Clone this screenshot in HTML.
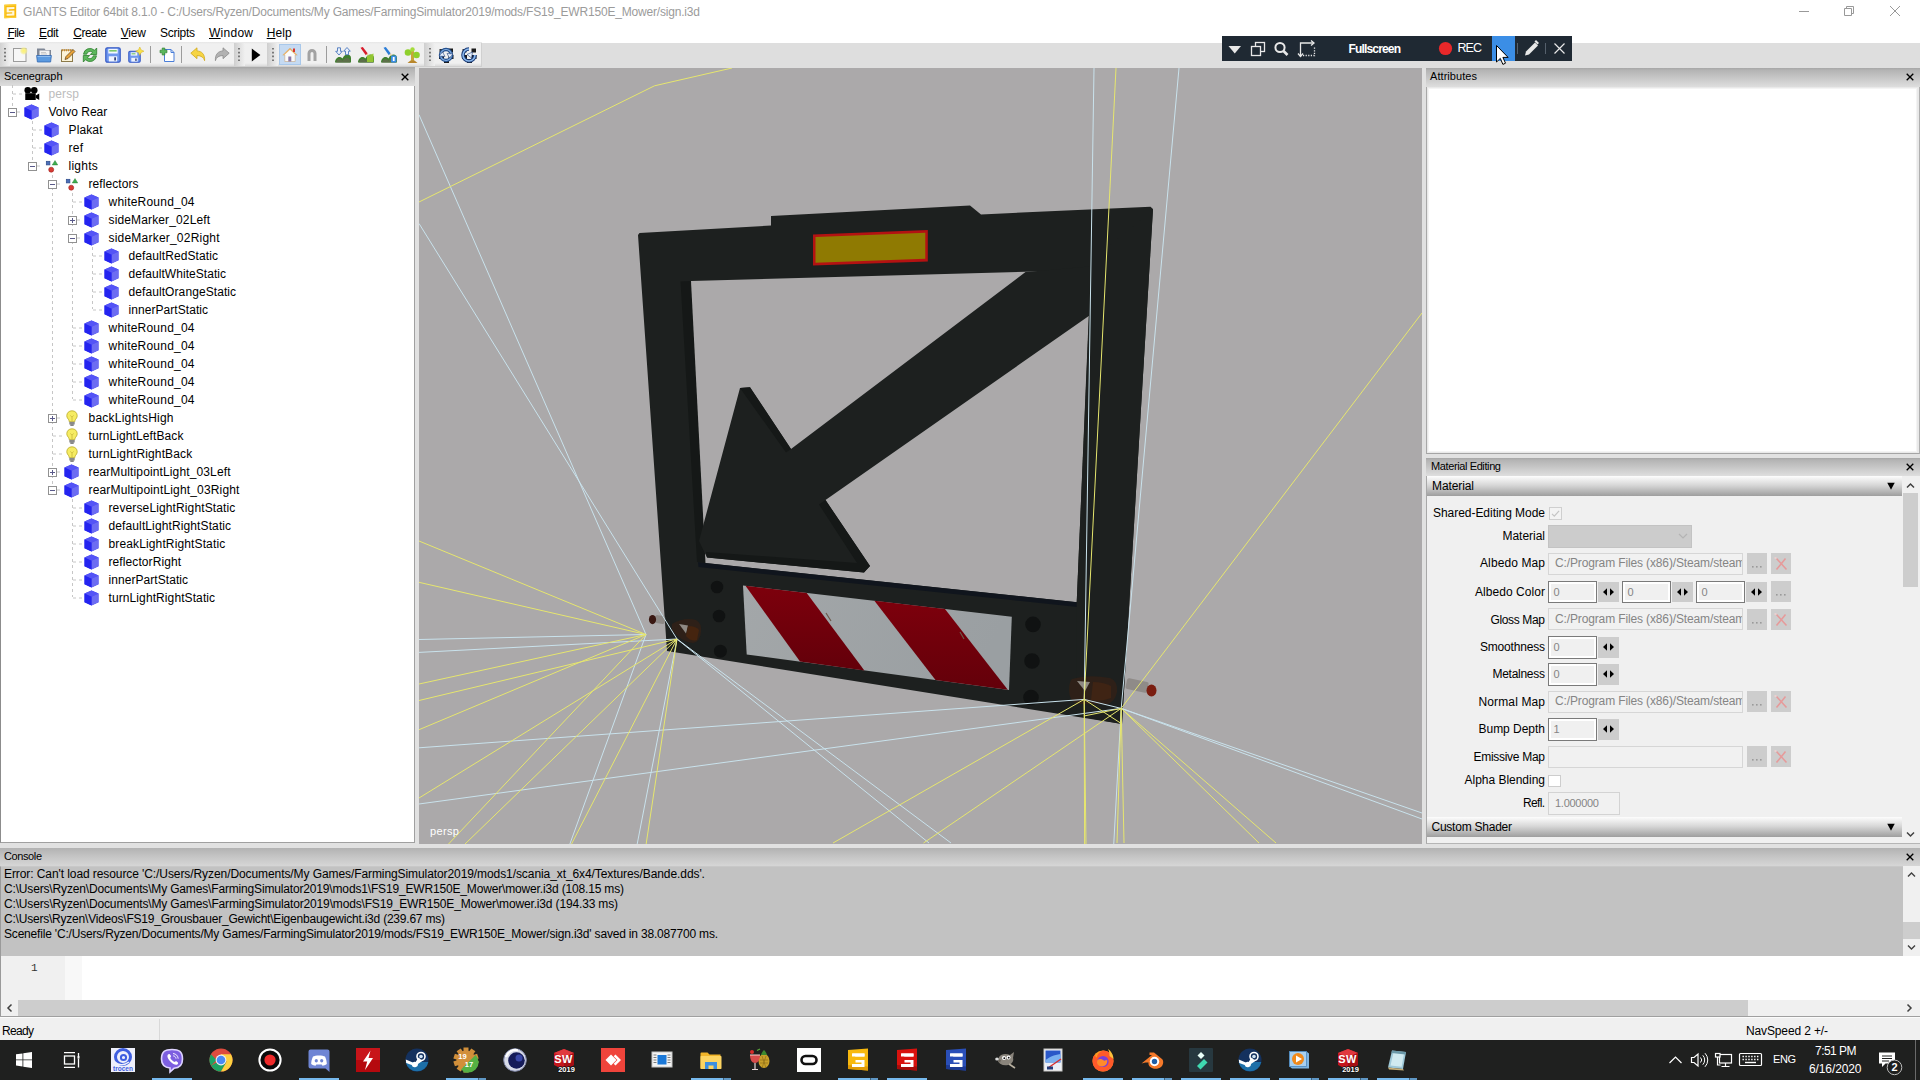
<!DOCTYPE html>
<html lang="en"><head><meta charset="utf-8"><title>GIANTS Editor 64bit 8.1.0</title>
<style>
html,body{margin:0;padding:0;}
body{width:1920px;height:1080px;overflow:hidden;background:#e1e1e1;position:relative;font-family:"Liberation Sans","DejaVu Sans",sans-serif;}
.t{position:absolute;white-space:pre;}
.r{position:absolute;box-sizing:border-box;}
svg{position:absolute;overflow:visible;}
u{text-decoration:underline;text-underline-offset:1px;}
.hd{position:absolute;box-sizing:border-box;background:linear-gradient(#a6a6a6 0,#b4b4b4 12%,#c6c6c6 50%,#dedede 100%);}
.hd2{position:absolute;box-sizing:border-box;background:linear-gradient(#b2b2b2 0,#c4c4c4 45%,#d6d6d6 100%);}
.sec{position:absolute;box-sizing:border-box;background:linear-gradient(#fdfdfd,#d8d8d8 45%,#9e9e9e);}
</style></head><body>

<div class="r" style="left:0px;top:0px;width:1920px;height:22px;background:#fff;"></div>
<svg style="left:3.5px;top:4px" width="12.5" height="14.5" viewBox="0 0 12.5 14.5"><path d="M0.300 0.800L12.200 0.200v13.500L0.300 14.300z" fill="#f9b90a"/><path d="M0.300 0.800L12.200 0.200v1.300L1.500 2v11l10.700-.500v1.200L0.300 14.300z" fill="#fbd03a"/><path d="M2.600 3.300l7.800-.3v2.100l-5.600.2v1.500l5.600-.2v4.900l-7.800.3v-2l5.600-.200V8.300l-5.600.2z" fill="#fff7dc"/></svg>
<span class="t" style="left:23px;top:2.5px;font-size:12px;line-height:18px;color:#9b9b9b;font-family:'Liberation Sans','DejaVu Sans',sans-serif;font-weight:normal;letter-spacing:-0.187px;">GIANTS Editor 64bit 8.1.0 - C:/Users/Ryzen/Documents/My Games/FarmingSimulator2019/mods/FS19_EWR150E_Mower/sign.i3d</span>
<svg style="left:1780px;top:0" width="140" height="22" viewBox="0 0 140 22"><g stroke="#999" stroke-width="1" fill="none"><path d="M19 11.5h10"/><path d="M64.5 8.5h7v7h-7z M66.5 8.5v-2h7v7h-2"/><path d="M110 6l10 10M120 6l-10 10"/></g></svg>
<div class="r" style="left:0px;top:22px;width:1920px;height:21px;background:#fff;"></div>
<span class="t" style="left:7.5px;top:23.5px;font-size:12px;line-height:18px;color:#000;font-family:'Liberation Sans','DejaVu Sans',sans-serif;font-weight:normal;letter-spacing:-0.615px;"><u>F</u>ile</span>
<span class="t" style="left:39px;top:23.5px;font-size:12px;line-height:18px;color:#000;font-family:'Liberation Sans','DejaVu Sans',sans-serif;font-weight:normal;letter-spacing:-0.329px;"><u>E</u>dit</span>
<span class="t" style="left:73.3px;top:23.5px;font-size:12px;line-height:18px;color:#000;font-family:'Liberation Sans','DejaVu Sans',sans-serif;font-weight:normal;letter-spacing:-0.466px;"><u>C</u>reate</span>
<span class="t" style="left:120.8px;top:23.5px;font-size:12px;line-height:18px;color:#000;font-family:'Liberation Sans','DejaVu Sans',sans-serif;font-weight:normal;letter-spacing:-0.266px;"><u>V</u>iew</span>
<span class="t" style="left:160px;top:23.5px;font-size:12px;line-height:18px;color:#000;font-family:'Liberation Sans','DejaVu Sans',sans-serif;font-weight:normal;letter-spacing:-0.281px;">Scripts</span>
<span class="t" style="left:209px;top:23.5px;font-size:12px;line-height:18px;color:#000;font-family:'Liberation Sans','DejaVu Sans',sans-serif;font-weight:normal;letter-spacing:0.263px;"><u>W</u>indow</span>
<span class="t" style="left:266.7px;top:23.5px;font-size:12px;line-height:18px;color:#000;font-family:'Liberation Sans','DejaVu Sans',sans-serif;font-weight:normal;letter-spacing:0.104px;"><u>H</u>elp</span>
<div class="r" style="left:0;top:42px;width:482px;height:25px;background:linear-gradient(#e6e6e6 0,#f0f0f0 2px,#f0f0f0 21px,#dcdcdc 24px,#c2c2c2 25px)"></div>
<div class="r" style="left:482px;top:43px;width:1438px;height:25px;background:#dedede"></div>
<div class="r" style="left:0px;top:43px;width:10px;height:23px;background:linear-gradient(90deg,#d2d2d2,#f0f0f0)"></div>
<div class="r" style="left:234.5px;top:43px;width:10px;height:23px;background:linear-gradient(90deg,#d2d2d2,#f0f0f0)"></div>
<div class="r" style="left:267.5px;top:43px;width:10px;height:23px;background:linear-gradient(90deg,#d2d2d2,#f0f0f0)"></div>
<div class="r" style="left:424.5px;top:43px;width:10px;height:23px;background:linear-gradient(90deg,#d2d2d2,#f0f0f0)"></div>
<svg style="left:4px;top:46px" width="3" height="17" viewBox="0 0 3 17"><path d="M1 2v14" stroke="#5f5f5f" stroke-width="1.600" stroke-dasharray="1.600 2.200"/></svg>
<svg style="left:238px;top:46px" width="3" height="17" viewBox="0 0 3 17"><path d="M1 2v14" stroke="#5f5f5f" stroke-width="1.600" stroke-dasharray="1.600 2.200"/></svg>
<svg style="left:272px;top:46px" width="3" height="17" viewBox="0 0 3 17"><path d="M1 2v14" stroke="#5f5f5f" stroke-width="1.600" stroke-dasharray="1.600 2.200"/></svg>
<svg style="left:429px;top:46px" width="3" height="17" viewBox="0 0 3 17"><path d="M1 2v14" stroke="#5f5f5f" stroke-width="1.600" stroke-dasharray="1.600 2.200"/></svg>
<div class="r" style="left:150px;top:46px;width:1px;height:17px;background:#9c9c9c"></div>
<div class="r" style="left:181px;top:46px;width:1px;height:17px;background:#9c9c9c"></div>
<div class="r" style="left:326px;top:46px;width:1px;height:17px;background:#9c9c9c"></div>
<div class="r" style="left:234px;top:43px;width:1px;height:23px;background:#d0d0d0"></div>
<div class="r" style="left:267px;top:43px;width:1px;height:23px;background:#d0d0d0"></div>
<div class="r" style="left:424px;top:43px;width:1px;height:23px;background:#d0d0d0"></div>
<div class="r" style="left:481px;top:43px;width:1px;height:23px;background:#d0d0d0"></div>
<div class="r" style="left:278.500px;top:44px;width:22.500px;height:20.500px;background:#c5daf2;border:1px solid #a9c8ea"></div>
<svg style="left:12.399999999999999px;top:47px" width="16" height="16" viewBox="0 0 16 16"><defs><radialGradient id="gl"><stop offset="0" stop-color="#fff36a"/><stop offset="0.600" stop-color="#f6ee8a" stop-opacity=".8"/><stop offset="1" stop-color="#f6ee8a" stop-opacity="0"/></radialGradient></defs><rect x="1.500" y="1.500" width="12.500" height="13" fill="#f7f7f7" stroke="#9c9c9c"/><circle cx="11.800" cy="3.800" r="4.200" fill="url(#gl)"/></svg>
<svg style="left:35.8px;top:47px" width="16" height="16" viewBox="0 0 16 16"><path d="M1 1.500h7.500l1 1.500H15v7H1z" fill="#7f8796"/><rect x="3.500" y="3.500" width="10" height="6" fill="#f2f2f2"/><path d="M5 5.500h5M5 7h6" stroke="#b8b8b8" stroke-width=".7"/><path d="M0.600 8.500h14.800l-.8 6.500H1.400z" fill="#5b9ae0" stroke="#3468b0" stroke-width=".8"/><path d="M1.500 9.500h13" stroke="#9cc6f4" stroke-width=".8"/></svg>
<svg style="left:59.5px;top:47px" width="16" height="16" viewBox="0 0 16 16"><rect x="1.500" y="3" width="11" height="11.500" fill="#fbf3d8" stroke="#8c7a4a"/><path d="M2 3.200h10" stroke="#d08a28" stroke-width="2" stroke-dasharray="1 1"/><path d="M5 12.500l1-3 7-7 2 2-7 7z" fill="#e8a33a" stroke="#6b4a1c" stroke-width=".8"/></svg>
<svg style="left:82px;top:47px" width="16" height="16" viewBox="0 0 16 16"><path d="M1.500 7.200a6.500 6.500 0 0 1 11-3.900L14.700 1v6.500H8.300l2.300-2.300A3.600 3.600 0 0 0 4.700 7.200z" fill="#5cb85c" stroke="#2f7f2f" stroke-width=".8"/><path d="M14.500 8.800a6.500 6.500 0 0 1-11 3.900L1.300 15V8.500h6.400l-2.300 2.300a3.600 3.600 0 0 0 5.900-2z" fill="#5cb85c" stroke="#2f7f2f" stroke-width=".8"/></svg>
<svg style="left:105px;top:47px" width="16" height="16" viewBox="0 0 16 16"><rect x="0.800" y="0.800" width="14.400" height="14.400" rx="1.500" fill="#6f98ee" stroke="#3558c4" stroke-width="1.200"/><rect x="3.300" y="1.800" width="9.400" height="4.700" fill="#f2f6ff"/><rect x="4.300" y="3" width="7.400" height="1.600" fill="#7bc86a"/><rect x="3.800" y="9.300" width="8.400" height="5.200" fill="#eef3ff"/><rect x="9.300" y="10.300" width="1.600" height="3.200" fill="#1f2f6a"/></svg>
<svg style="left:128px;top:47px" width="16" height="16" viewBox="0 0 16 16"><rect x="0.800" y="4.300" width="11.400" height="10.900" rx="1.200" fill="#6f98ee" stroke="#3558c4" stroke-width="1.100"/><rect x="2.800" y="5.300" width="6.500" height="3.300" fill="#f2f6ff"/><rect x="3.500" y="6.200" width="4" height="1.200" fill="#7bc86a"/><rect x="3.300" y="10.800" width="6.400" height="3.800" fill="#eef3ff"/><rect x="7.300" y="11.500" width="1.300" height="2.400" fill="#1f2f6a"/><path d="M11.800 0l1.300 2.900 2.900 1.300-2.900 1.300-1.300 2.900-1.300-2.900L7.600 4.200l2.900-1.300z" fill="#f9e24a" stroke="#d4b020" stroke-width=".5"/></svg>
<svg style="left:158.5px;top:47px" width="16" height="16" viewBox="0 0 16 16"><path d="M5.500 2.500h6.500l3 3v9H5.500z" fill="#fff" stroke="#4a7ed8"/><path d="M12 2.500v3h3" fill="none" stroke="#4a7ed8"/><path d="M3.200 1v2.200H1v2.600h2.200V8h2.600V5.800H8V3.200H5.800V1z" fill="#5cb85c" stroke="#2c7a2c" stroke-width=".6"/></svg>
<svg style="left:190px;top:47px" width="16" height="16" viewBox="0 0 16 16"><path d="M0.800 6.200L7 0.800v3.100c4.800.3 8 3.300 7.600 9.800-.8-3.300-3.200-5-7.600-5.200v3.200z" fill="#f6d443" stroke="#d0a81c" stroke-width=".8"/></svg>
<svg style="left:213.5px;top:47px" width="16" height="16" viewBox="0 0 16 16"><path d="M15.200 6.200L9 0.800v3.100C4.200 4.200 1 7.200 1.400 13.700c.8-3.300 3.200-5 7.600-5.200v3.200z" fill="#b2b2b2" stroke="#8c8c8c" stroke-width=".8"/></svg>
<svg style="left:248px;top:47px" width="16" height="16" viewBox="0 0 16 16"><path d="M3.800 1.500v13l8.600-6.500z" fill="#000"/></svg>
<svg style="left:281.7px;top:47px" width="16" height="16" viewBox="0 0 16 16"><path d="M8 1L0.800 8h2v6.500h10.400V8h2z" fill="#fbfbfb" stroke="#c9b090" stroke-width=".7"/><path d="M8 1L0.800 8h1.600L8 2.800 13.600 8h1.600z" fill="#e8b36a"/><rect x="11" y="1.500" width="2" height="3.500" fill="#d8342c"/><rect x="6.300" y="9.500" width="3" height="5" fill="#8a78a8"/></svg>
<svg style="left:304px;top:47px" width="16" height="16" viewBox="0 0 16 16"><path d="M3.500 14V6.500a4.500 4.500 0 0 1 9 0V14h-3V6.500a1.500 1.500 0 0 0-3 0V14z" fill="#a2a2a2"/></svg>
<svg style="left:335px;top:47px" width="16" height="16" viewBox="0 0 16 16"><path d="M0 15.500c0-3 2-5.500 4.500-5.500 1.200 0 2 .5 3 1.500 1-2.500 3-4 5-4 2 0 3.500 1.500 3.500 3.500V15.500z" fill="#3f7f2e"/><path d="M1 15.500c.5-2 1.800-3.500 3.500-3.500 1.200 0 2 .8 3 1.800 1-1.500 2.500-2.800 4.500-2.800 1.500 0 3 1 3 2.500v2z" fill="#5d6f4a"/><path d="M2.500 0.800h3v3.500h1.800L4 8 0.700 4.300h1.800z" fill="#e8f0fb" stroke="#3a6ab8" stroke-width=".8"/><path d="M12 0.500l3.300 3.700h-1.800v3.500h-3V4.200H8.700z" fill="#e8f0fb" stroke="#3a6ab8" stroke-width=".8"/></svg>
<svg style="left:358px;top:47px" width="16" height="16" viewBox="0 0 16 16"><path d="M0 15.500c0-3 2-5.500 4.500-5.500 1.200 0 2 .5 3 1.500 1-2.500 3-4 5-4 2 0 3.500 1.500 3.500 3.500V15.500z" fill="#3f7f2e"/><path d="M1 15.500c.5-2 1.800-3.500 3.500-3.500 1.200 0 2 .8 3 1.800 1-1.500 2.500-2.800 4.500-2.800 1.500 0 3 1 3 2.500v2z" fill="#5d6f4a"/><path d="M2.500 0.800L4.800 0l5 6.500-2 1.800z" fill="#d81c2c"/><path d="M8.300 7.500l1.600-1.400 1.400 3z" fill="#f0d0a0"/><path d="M9 9l6.500-2.500V15H9z" fill="#9acd32" opacity=".9"/></svg>
<svg style="left:381px;top:47px" width="16" height="16" viewBox="0 0 16 16"><path d="M0 15.500c0-3 2-5.500 4.500-5.500 1.200 0 2 .5 3 1.500 1-2.500 3-4 5-4 2 0 3.500 1.500 3.500 3.500V15.500z" fill="#3f7f2e"/><path d="M1 15.500c.5-2 1.800-3.500 3.500-3.500 1.200 0 2 .8 3 1.800 1-1.500 2.500-2.800 4.500-2.800 1.500 0 3 1 3 2.500v2z" fill="#5d6f4a"/><path d="M2.500 0.800L4.800 0l5 6.500-2 1.800z" fill="#2c7ed8"/><path d="M8.300 7.500l1.600-1.400 1.400 3z" fill="#f0d0a0"/><rect x="10" y="8.500" width="5.500" height="7" rx="1" fill="#3a8ee6"/><rect x="11.800" y="10" width="1.800" height="4" fill="#fff"/></svg>
<svg style="left:403.5px;top:47px" width="16" height="16" viewBox="0 0 16 16"><path d="M7 15.500V4.500l1.800-3.500L10 4.500v11z" fill="#c9a53a"/><path d="M3.500 16l3-2.500h4l3 2.500z" fill="#b8862c"/><circle cx="4" cy="5.500" r="3.300" fill="#8fd02c"/><circle cx="12.500" cy="8" r="3.300" fill="#8fd02c"/><circle cx="8.500" cy="2.500" r="2.200" fill="#a5dc3c"/></svg>
<svg style="left:438px;top:47px" width="16" height="16" viewBox="0 0 16 16"><rect x="1" y="8" width="5" height="4" fill="#1a1a1a"/><rect x="6" y="12" width="5" height="4" fill="#1a1a1a"/><rect x="10.500" y="8" width="5" height="4" fill="#1a1a1a"/><rect x="10.500" y="1.500" width="4.500" height="4" fill="#1a1a1a"/><rect x="1.500" y="2" width="4" height="3.500" fill="#333"/><circle cx="8" cy="8" r="5.500" fill="none" stroke="#24508f" stroke-width="3.400"/><circle cx="8" cy="8" r="5.500" fill="none" stroke="#8ab4e6" stroke-width="1.200"/><path d="M1 9l3.500-4 2.500 4.500z" fill="#e8f2ff" stroke="#1c3c78" stroke-width=".6"/><path d="M15 7l-3.500 4-2.500-4.500z" fill="#e8f2ff" stroke="#1c3c78" stroke-width=".6"/></svg>
<svg style="left:461px;top:47px" width="16" height="16" viewBox="0 0 16 16"><rect x="1" y="8" width="5" height="4" fill="#1a1a1a"/><rect x="6" y="12" width="5" height="4" fill="#1a1a1a"/><rect x="10.500" y="8" width="5" height="4" fill="#1a1a1a"/><rect x="10.500" y="1.500" width="4.500" height="4" fill="#1a1a1a"/><rect x="1.500" y="2" width="4" height="3.500" fill="#333"/><path d="M8 2a6 6 0 1 0 6 6" fill="none" stroke="#1c3c78" stroke-width="3.600"/><path d="M8 2a6 6 0 1 0 6 6" fill="none" stroke="#8ab8ec" stroke-width="1.600"/><path d="M6 7.500l5.500-2.500-1 6z" fill="#e8f2ff" stroke="#1c3c78" stroke-width=".6"/></svg>
<div class="r" style="left:1222px;top:36px;width:349.800px;height:24.500px;background:#1f2933"></div>
<div class="r" style="left:1492px;top:36px;width:23px;height:24.500px;background:#3b8ee6"></div>
<svg style="left:1222px;top:36px" width="351" height="25" viewBox="0 0 351 25"><path d="M6.500 10h12.500l-6.250 7.500z" fill="#e8e8e8"/><g fill="none" stroke="#e8e8e8" stroke-width="1.300"><rect x="33.500" y="6.500" width="9" height="9"/><rect x="29.500" y="10.500" width="9" height="9" fill="#1f2933"/><circle cx="58" cy="11.500" r="4.600" stroke-width="2"/><path d="M61.500 15l4 4" stroke-width="2.600"/><path d="M78.500 20.500v-13.500h13.500" /><path d="M81 19.500h11.500v-9" stroke-dasharray="1.200 1.400"/><path d="M76 17.500l2.500 3 2.500-3M89 4.500l3 2.500-3 2.500"/></g><circle cx="223.500" cy="12.500" r="6.600" fill="#e8282a"/><path d="M295.500 7v11M323.500 7v11" stroke="#55606c" stroke-width="1"/><path d="M303 19.500l1-4 9-9 3 3-9 9z" fill="#e8e8e8"/><path d="M312.500 5.500l1.500-1.500 3 3-1.500 1.500z" fill="#e8e8e8"/><path d="M332.500 7.500l10 10M342.500 7.500l-10 10" stroke="#e8e8e8" stroke-width="1.200"/><path d="M274.500 9.500v16.500l3.800-3.600 2.600 6 2.600-1.200-2.600-5.800h5.200z" fill="#fff" stroke="#000" stroke-width="1"/></svg>
<span class="t" style="left:1348.5px;top:39.5px;font-size:12px;line-height:18px;color:#fff;font-family:'Liberation Sans','DejaVu Sans',sans-serif;font-weight:bold;letter-spacing:-0.837px;">Fullscreen</span>
<span class="t" style="left:1457.5px;top:39.2px;font-size:12.5px;line-height:18.5px;color:#fff;font-family:'Liberation Sans','DejaVu Sans',sans-serif;font-weight:normal;letter-spacing:-0.953px;">REC</span>
<div class="hd" style="left:0;top:67px;width:415px;height:19px"></div>
<span class="t" style="left:4px;top:68.0px;font-size:11px;line-height:17px;color:#000;font-family:'Liberation Sans','DejaVu Sans',sans-serif;font-weight:normal;letter-spacing:-0.092px;">Scenegraph</span>
<svg style="left:401px;top:73px" width="8" height="8" viewBox="0 0 8 8"><path d="M0.7 0.7l6.6 6.6M7.3 0.7l-6.6 6.6" stroke="#000" stroke-width="1.35"/></svg>
<div class="r" style="left:0px;top:86px;width:415px;height:757px;background:#fff;border-left:1px solid #8c8c8c;border-right:1px solid #a0a0a0;border-bottom:1px solid #a0a0a0;"></div>
<svg style="left:0px;top:0px" width="415" height="620" viewBox="0 0 415 620"><path d="M12.5 85V108M32.5 121V165M52.5 175V489M72.5 193V399M92.5 247V309M72.5 499V597M13 94.0H22M17 112.0H22M33 130.0H42M33 148.0H42M37 166.0H42M57 184.0H62M73 202.0H82M77 220.0H82M77 238.0H82M93 256.0H102M93 274.0H102M93 292.0H102M93 310.0H102M73 328.0H82M73 346.0H82M73 364.0H82M73 382.0H82M73 400.0H82M57 418.0H62M53 436.0H62M53 454.0H62M57 472.0H62M57 490.0H62M73 508.0H82M73 526.0H82M73 544.0H82M73 562.0H82M73 580.0H82M73 598.0H82" stroke="#c6c6c6" stroke-width="1" stroke-dasharray="3 3" fill="none"/></svg>
<svg style="left:22.5px;top:86px" width="16.5" height="16" viewBox="0 0 16 16"><circle cx="4.5" cy="4.200" r="3.300" fill="#000"/><circle cx="11" cy="4.200" r="3.300" fill="#000"/><rect x="2" y="7.200" width="10.500" height="6.800" fill="#000"/><path d="M12.500 9.500L16 7.500v6.500l-3.500-2z" fill="#000"/></svg>
<span class="t" style="left:48.5px;top:85.0px;font-size:12px;line-height:18px;color:#bcbcbc;font-family:'Liberation Sans','DejaVu Sans',sans-serif;font-weight:normal;letter-spacing:0.117px;">persp</span>
<svg style="left:8px;top:108px" width="9" height="9" viewBox="0 0 9 9"><rect x="0.5" y="0.500" width="8" height="8" fill="#fff" stroke="#919191"/><path d="M2 4.500h5" stroke="#5a5a8a"/></svg>
<svg style="left:23.5px;top:103.5px" width="16" height="16" viewBox="0 0 16 16"><path d="M7.500 0.600L14.500 3.600v8.600L7.500 15.600 0.500 12.200V3.600z" fill="#3a3af0"/><path d="M7.500 0.600L14.500 3.600 7.500 6.800 0.500 3.600z" fill="#5454f6"/><path d="M7.500 6.800L14.500 3.600v8.600L7.500 15.600z" fill="#6c6cf2"/><path d="M0.500 3.600L7.500 6.800v8.800L0.500 12.200z" fill="#2424f0"/></svg>
<span class="t" style="left:48.5px;top:103.0px;font-size:12px;line-height:18px;color:#000;font-family:'Liberation Sans','DejaVu Sans',sans-serif;font-weight:normal;letter-spacing:0.011px;">Volvo Rear</span>
<svg style="left:43.5px;top:121.5px" width="16" height="16" viewBox="0 0 16 16"><path d="M7.500 0.600L14.500 3.600v8.600L7.500 15.600 0.500 12.200V3.600z" fill="#3a3af0"/><path d="M7.500 0.600L14.500 3.600 7.500 6.800 0.500 3.600z" fill="#5454f6"/><path d="M7.500 6.800L14.500 3.600v8.600L7.500 15.600z" fill="#6c6cf2"/><path d="M0.500 3.600L7.500 6.800v8.800L0.500 12.200z" fill="#2424f0"/></svg>
<span class="t" style="left:68.5px;top:121.0px;font-size:12px;line-height:18px;color:#000;font-family:'Liberation Sans','DejaVu Sans',sans-serif;font-weight:normal;letter-spacing:0.128px;">Plakat</span>
<svg style="left:43.5px;top:139.5px" width="16" height="16" viewBox="0 0 16 16"><path d="M7.500 0.600L14.500 3.600v8.600L7.500 15.600 0.500 12.200V3.600z" fill="#3a3af0"/><path d="M7.500 0.600L14.500 3.600 7.500 6.800 0.500 3.600z" fill="#5454f6"/><path d="M7.500 6.800L14.500 3.600v8.600L7.500 15.600z" fill="#6c6cf2"/><path d="M0.500 3.600L7.500 6.800v8.800L0.500 12.200z" fill="#2424f0"/></svg>
<span class="t" style="left:68.5px;top:139.0px;font-size:12px;line-height:18px;color:#000;font-family:'Liberation Sans','DejaVu Sans',sans-serif;font-weight:normal;letter-spacing:0.242px;">ref</span>
<svg style="left:28px;top:162px" width="9" height="9" viewBox="0 0 9 9"><rect x="0.5" y="0.500" width="8" height="8" fill="#fff" stroke="#919191"/><path d="M2 4.500h5" stroke="#5a5a8a"/></svg>
<svg style="left:43.5px;top:157.5px" width="16" height="16" viewBox="0 0 16 16"><rect x="2.3" y="3.3" width="3.6" height="3.6" fill="#4a6fb8" stroke="#2d4a8a" stroke-width="0.7"/><path d="M11 2.6l2.7 4.3H8.300z" fill="#3fae4e" stroke="#2b7f37" stroke-width="0.5"/><circle cx="7.200" cy="11.700" r="2.500" fill="#d83a34" stroke="#9e211d" stroke-width="0.6"/></svg>
<span class="t" style="left:68.5px;top:157.0px;font-size:12px;line-height:18px;color:#000;font-family:'Liberation Sans','DejaVu Sans',sans-serif;font-weight:normal;letter-spacing:0.257px;">lights</span>
<svg style="left:48px;top:180px" width="9" height="9" viewBox="0 0 9 9"><rect x="0.5" y="0.500" width="8" height="8" fill="#fff" stroke="#919191"/><path d="M2 4.500h5" stroke="#5a5a8a"/></svg>
<svg style="left:63.5px;top:175.5px" width="16" height="16" viewBox="0 0 16 16"><rect x="2.3" y="3.3" width="3.6" height="3.6" fill="#4a6fb8" stroke="#2d4a8a" stroke-width="0.7"/><path d="M11 2.6l2.7 4.3H8.300z" fill="#3fae4e" stroke="#2b7f37" stroke-width="0.5"/><circle cx="7.200" cy="11.700" r="2.500" fill="#d83a34" stroke="#9e211d" stroke-width="0.6"/></svg>
<span class="t" style="left:88.5px;top:175.0px;font-size:12px;line-height:18px;color:#000;font-family:'Liberation Sans','DejaVu Sans',sans-serif;font-weight:normal;letter-spacing:0.071px;">reflectors</span>
<svg style="left:83.5px;top:193.5px" width="16" height="16" viewBox="0 0 16 16"><path d="M7.500 0.600L14.500 3.600v8.600L7.500 15.600 0.500 12.200V3.600z" fill="#3a3af0"/><path d="M7.500 0.600L14.500 3.600 7.500 6.800 0.500 3.600z" fill="#5454f6"/><path d="M7.500 6.800L14.500 3.600v8.600L7.500 15.600z" fill="#6c6cf2"/><path d="M0.500 3.600L7.500 6.800v8.800L0.500 12.200z" fill="#2424f0"/></svg>
<span class="t" style="left:108.5px;top:193.0px;font-size:12px;line-height:18px;color:#000;font-family:'Liberation Sans','DejaVu Sans',sans-serif;font-weight:normal;letter-spacing:0.216px;">whiteRound_04</span>
<svg style="left:68px;top:216px" width="9" height="9" viewBox="0 0 9 9"><rect x="0.5" y="0.500" width="8" height="8" fill="#fff" stroke="#919191"/><path d="M2 4.500h5" stroke="#5a5a8a"/><path d="M4.500 2v5" stroke="#5a5a8a"/></svg>
<svg style="left:83.5px;top:211.5px" width="16" height="16" viewBox="0 0 16 16"><path d="M7.500 0.600L14.500 3.600v8.600L7.500 15.600 0.500 12.200V3.600z" fill="#3a3af0"/><path d="M7.500 0.600L14.500 3.600 7.500 6.800 0.500 3.600z" fill="#5454f6"/><path d="M7.500 6.800L14.500 3.600v8.600L7.500 15.600z" fill="#6c6cf2"/><path d="M0.500 3.600L7.500 6.800v8.800L0.500 12.200z" fill="#2424f0"/></svg>
<span class="t" style="left:108.5px;top:211.0px;font-size:12px;line-height:18px;color:#000;font-family:'Liberation Sans','DejaVu Sans',sans-serif;font-weight:normal;letter-spacing:0.138px;">sideMarker_02Left</span>
<svg style="left:68px;top:234px" width="9" height="9" viewBox="0 0 9 9"><rect x="0.5" y="0.500" width="8" height="8" fill="#fff" stroke="#919191"/><path d="M2 4.500h5" stroke="#5a5a8a"/></svg>
<svg style="left:83.5px;top:229.5px" width="16" height="16" viewBox="0 0 16 16"><path d="M7.500 0.600L14.500 3.600v8.600L7.500 15.600 0.500 12.200V3.600z" fill="#3a3af0"/><path d="M7.500 0.600L14.500 3.600 7.500 6.800 0.500 3.600z" fill="#5454f6"/><path d="M7.500 6.800L14.500 3.600v8.600L7.500 15.600z" fill="#6c6cf2"/><path d="M0.500 3.600L7.500 6.800v8.800L0.500 12.200z" fill="#2424f0"/></svg>
<span class="t" style="left:108.5px;top:229.0px;font-size:12px;line-height:18px;color:#000;font-family:'Liberation Sans','DejaVu Sans',sans-serif;font-weight:normal;letter-spacing:0.212px;">sideMarker_02Right</span>
<svg style="left:103.5px;top:247.5px" width="16" height="16" viewBox="0 0 16 16"><path d="M7.500 0.600L14.500 3.600v8.600L7.500 15.600 0.500 12.200V3.600z" fill="#3a3af0"/><path d="M7.500 0.600L14.500 3.600 7.500 6.800 0.500 3.600z" fill="#5454f6"/><path d="M7.500 6.800L14.500 3.600v8.600L7.500 15.600z" fill="#6c6cf2"/><path d="M0.500 3.600L7.500 6.800v8.800L0.500 12.200z" fill="#2424f0"/></svg>
<span class="t" style="left:128.5px;top:247.0px;font-size:12px;line-height:18px;color:#000;font-family:'Liberation Sans','DejaVu Sans',sans-serif;font-weight:normal;letter-spacing:0.089px;">defaultRedStatic</span>
<svg style="left:103.5px;top:265.5px" width="16" height="16" viewBox="0 0 16 16"><path d="M7.500 0.600L14.500 3.600v8.600L7.500 15.600 0.500 12.200V3.600z" fill="#3a3af0"/><path d="M7.500 0.600L14.500 3.600 7.500 6.800 0.500 3.600z" fill="#5454f6"/><path d="M7.500 6.800L14.500 3.600v8.600L7.500 15.600z" fill="#6c6cf2"/><path d="M0.500 3.600L7.500 6.800v8.800L0.500 12.200z" fill="#2424f0"/></svg>
<span class="t" style="left:128.5px;top:265.0px;font-size:12px;line-height:18px;color:#000;font-family:'Liberation Sans','DejaVu Sans',sans-serif;font-weight:normal;letter-spacing:0.046px;">defaultWhiteStatic</span>
<svg style="left:103.5px;top:283.5px" width="16" height="16" viewBox="0 0 16 16"><path d="M7.500 0.600L14.500 3.600v8.600L7.500 15.600 0.500 12.200V3.600z" fill="#3a3af0"/><path d="M7.500 0.600L14.500 3.600 7.500 6.800 0.500 3.600z" fill="#5454f6"/><path d="M7.500 6.800L14.500 3.600v8.600L7.500 15.600z" fill="#6c6cf2"/><path d="M0.500 3.600L7.500 6.800v8.800L0.500 12.200z" fill="#2424f0"/></svg>
<span class="t" style="left:128.5px;top:283.0px;font-size:12px;line-height:18px;color:#000;font-family:'Liberation Sans','DejaVu Sans',sans-serif;font-weight:normal;letter-spacing:0.085px;">defaultOrangeStatic</span>
<svg style="left:103.5px;top:301.5px" width="16" height="16" viewBox="0 0 16 16"><path d="M7.500 0.600L14.500 3.600v8.600L7.500 15.600 0.500 12.200V3.600z" fill="#3a3af0"/><path d="M7.500 0.600L14.500 3.600 7.500 6.800 0.500 3.600z" fill="#5454f6"/><path d="M7.500 6.800L14.500 3.600v8.600L7.500 15.600z" fill="#6c6cf2"/><path d="M0.500 3.600L7.500 6.800v8.800L0.500 12.200z" fill="#2424f0"/></svg>
<span class="t" style="left:128.5px;top:301.0px;font-size:12px;line-height:18px;color:#000;font-family:'Liberation Sans','DejaVu Sans',sans-serif;font-weight:normal;letter-spacing:0.057px;">innerPartStatic</span>
<svg style="left:83.5px;top:319.5px" width="16" height="16" viewBox="0 0 16 16"><path d="M7.500 0.600L14.500 3.600v8.600L7.500 15.600 0.500 12.200V3.600z" fill="#3a3af0"/><path d="M7.500 0.600L14.500 3.600 7.500 6.800 0.500 3.600z" fill="#5454f6"/><path d="M7.500 6.800L14.500 3.600v8.600L7.500 15.600z" fill="#6c6cf2"/><path d="M0.500 3.600L7.500 6.800v8.800L0.500 12.200z" fill="#2424f0"/></svg>
<span class="t" style="left:108.5px;top:319.0px;font-size:12px;line-height:18px;color:#000;font-family:'Liberation Sans','DejaVu Sans',sans-serif;font-weight:normal;letter-spacing:0.216px;">whiteRound_04</span>
<svg style="left:83.5px;top:337.5px" width="16" height="16" viewBox="0 0 16 16"><path d="M7.500 0.600L14.500 3.600v8.600L7.500 15.600 0.500 12.200V3.600z" fill="#3a3af0"/><path d="M7.500 0.600L14.500 3.600 7.500 6.800 0.500 3.600z" fill="#5454f6"/><path d="M7.500 6.800L14.500 3.600v8.600L7.500 15.600z" fill="#6c6cf2"/><path d="M0.500 3.600L7.500 6.800v8.800L0.500 12.200z" fill="#2424f0"/></svg>
<span class="t" style="left:108.5px;top:337.0px;font-size:12px;line-height:18px;color:#000;font-family:'Liberation Sans','DejaVu Sans',sans-serif;font-weight:normal;letter-spacing:0.216px;">whiteRound_04</span>
<svg style="left:83.5px;top:355.5px" width="16" height="16" viewBox="0 0 16 16"><path d="M7.500 0.600L14.500 3.600v8.600L7.500 15.600 0.500 12.200V3.600z" fill="#3a3af0"/><path d="M7.500 0.600L14.500 3.600 7.500 6.800 0.500 3.600z" fill="#5454f6"/><path d="M7.500 6.800L14.500 3.600v8.600L7.500 15.600z" fill="#6c6cf2"/><path d="M0.500 3.600L7.500 6.800v8.800L0.500 12.200z" fill="#2424f0"/></svg>
<span class="t" style="left:108.5px;top:355.0px;font-size:12px;line-height:18px;color:#000;font-family:'Liberation Sans','DejaVu Sans',sans-serif;font-weight:normal;letter-spacing:0.216px;">whiteRound_04</span>
<svg style="left:83.5px;top:373.5px" width="16" height="16" viewBox="0 0 16 16"><path d="M7.500 0.600L14.500 3.600v8.600L7.500 15.600 0.500 12.200V3.600z" fill="#3a3af0"/><path d="M7.500 0.600L14.500 3.600 7.500 6.800 0.500 3.600z" fill="#5454f6"/><path d="M7.500 6.800L14.500 3.600v8.600L7.500 15.600z" fill="#6c6cf2"/><path d="M0.500 3.600L7.500 6.800v8.800L0.500 12.200z" fill="#2424f0"/></svg>
<span class="t" style="left:108.5px;top:373.0px;font-size:12px;line-height:18px;color:#000;font-family:'Liberation Sans','DejaVu Sans',sans-serif;font-weight:normal;letter-spacing:0.216px;">whiteRound_04</span>
<svg style="left:83.5px;top:391.5px" width="16" height="16" viewBox="0 0 16 16"><path d="M7.500 0.600L14.500 3.600v8.600L7.500 15.600 0.500 12.200V3.600z" fill="#3a3af0"/><path d="M7.500 0.600L14.500 3.600 7.500 6.800 0.500 3.600z" fill="#5454f6"/><path d="M7.500 6.800L14.500 3.600v8.600L7.500 15.600z" fill="#6c6cf2"/><path d="M0.500 3.600L7.500 6.800v8.800L0.500 12.200z" fill="#2424f0"/></svg>
<span class="t" style="left:108.5px;top:391.0px;font-size:12px;line-height:18px;color:#000;font-family:'Liberation Sans','DejaVu Sans',sans-serif;font-weight:normal;letter-spacing:0.216px;">whiteRound_04</span>
<svg style="left:48px;top:414px" width="9" height="9" viewBox="0 0 9 9"><rect x="0.5" y="0.500" width="8" height="8" fill="#fff" stroke="#919191"/><path d="M2 4.500h5" stroke="#5a5a8a"/><path d="M4.500 2v5" stroke="#5a5a8a"/></svg>
<svg style="left:63.5px;top:409.5px" width="16" height="16" viewBox="0 0 16 16"><path d="M8 0.8c3.2 0 5.2 2.2 5.2 4.9 0 2-1.2 3-1.9 4.1-.4.7-.4 1.3-.5 1.9H5.2c-.1-.6-.1-1.2-.5-1.9C4 8.700 2.800 7.700 2.800 5.700 2.800 3 4.800.800 8 .800z" fill="#f6ec62" stroke="#b9a92a" stroke-width="0.8"/><path d="M6.3 5.500l1.700 1.600 1.700-1.600M8 7.100v4" stroke="#c9b838" stroke-width="0.8" fill="none"/><rect x="5.300" y="11.900" width="5.400" height="2.600" fill="#8a8a8a"/><rect x="6.300" y="14.500" width="3.400" height="1.200" fill="#555"/></svg>
<span class="t" style="left:88.5px;top:409.0px;font-size:12px;line-height:18px;color:#000;font-family:'Liberation Sans','DejaVu Sans',sans-serif;font-weight:normal;letter-spacing:0.226px;">backLightsHigh</span>
<svg style="left:63.5px;top:427.5px" width="16" height="16" viewBox="0 0 16 16"><path d="M8 0.8c3.2 0 5.2 2.2 5.2 4.9 0 2-1.2 3-1.9 4.1-.4.7-.4 1.3-.5 1.9H5.2c-.1-.6-.1-1.2-.5-1.9C4 8.700 2.800 7.700 2.800 5.700 2.800 3 4.800.800 8 .800z" fill="#f6ec62" stroke="#b9a92a" stroke-width="0.8"/><path d="M6.3 5.500l1.700 1.600 1.700-1.600M8 7.100v4" stroke="#c9b838" stroke-width="0.8" fill="none"/><rect x="5.300" y="11.900" width="5.400" height="2.600" fill="#8a8a8a"/><rect x="6.300" y="14.500" width="3.400" height="1.200" fill="#555"/></svg>
<span class="t" style="left:88.5px;top:427.0px;font-size:12px;line-height:18px;color:#000;font-family:'Liberation Sans','DejaVu Sans',sans-serif;font-weight:normal;letter-spacing:0.093px;">turnLightLeftBack</span>
<svg style="left:63.5px;top:445.5px" width="16" height="16" viewBox="0 0 16 16"><path d="M8 0.8c3.2 0 5.2 2.2 5.2 4.9 0 2-1.2 3-1.9 4.1-.4.7-.4 1.3-.5 1.9H5.2c-.1-.6-.1-1.2-.5-1.9C4 8.700 2.800 7.700 2.800 5.700 2.800 3 4.800.800 8 .800z" fill="#f6ec62" stroke="#b9a92a" stroke-width="0.8"/><path d="M6.3 5.500l1.700 1.600 1.700-1.600M8 7.100v4" stroke="#c9b838" stroke-width="0.8" fill="none"/><rect x="5.300" y="11.900" width="5.400" height="2.600" fill="#8a8a8a"/><rect x="6.300" y="14.500" width="3.400" height="1.200" fill="#555"/></svg>
<span class="t" style="left:88.5px;top:445.0px;font-size:12px;line-height:18px;color:#000;font-family:'Liberation Sans','DejaVu Sans',sans-serif;font-weight:normal;letter-spacing:0.136px;">turnLightRightBack</span>
<svg style="left:48px;top:468px" width="9" height="9" viewBox="0 0 9 9"><rect x="0.5" y="0.500" width="8" height="8" fill="#fff" stroke="#919191"/><path d="M2 4.500h5" stroke="#5a5a8a"/><path d="M4.500 2v5" stroke="#5a5a8a"/></svg>
<svg style="left:63.5px;top:463.5px" width="16" height="16" viewBox="0 0 16 16"><path d="M7.500 0.600L14.500 3.600v8.600L7.500 15.600 0.500 12.200V3.600z" fill="#3a3af0"/><path d="M7.500 0.600L14.500 3.600 7.500 6.800 0.500 3.600z" fill="#5454f6"/><path d="M7.500 6.800L14.500 3.600v8.600L7.500 15.600z" fill="#6c6cf2"/><path d="M0.500 3.600L7.500 6.800v8.800L0.500 12.200z" fill="#2424f0"/></svg>
<span class="t" style="left:88.5px;top:463.0px;font-size:12px;line-height:18px;color:#000;font-family:'Liberation Sans','DejaVu Sans',sans-serif;font-weight:normal;letter-spacing:0.129px;">rearMultipointLight_03Left</span>
<svg style="left:48px;top:486px" width="9" height="9" viewBox="0 0 9 9"><rect x="0.5" y="0.500" width="8" height="8" fill="#fff" stroke="#919191"/><path d="M2 4.500h5" stroke="#5a5a8a"/></svg>
<svg style="left:63.5px;top:481.5px" width="16" height="16" viewBox="0 0 16 16"><path d="M7.500 0.600L14.500 3.600v8.600L7.500 15.600 0.500 12.200V3.600z" fill="#3a3af0"/><path d="M7.500 0.600L14.500 3.600 7.500 6.800 0.500 3.600z" fill="#5454f6"/><path d="M7.500 6.800L14.500 3.600v8.600L7.500 15.600z" fill="#6c6cf2"/><path d="M0.500 3.600L7.500 6.800v8.800L0.500 12.200z" fill="#2424f0"/></svg>
<span class="t" style="left:88.5px;top:481.0px;font-size:12px;line-height:18px;color:#000;font-family:'Liberation Sans','DejaVu Sans',sans-serif;font-weight:normal;letter-spacing:0.159px;">rearMultipointLight_03Right</span>
<svg style="left:83.5px;top:499.5px" width="16" height="16" viewBox="0 0 16 16"><path d="M7.500 0.600L14.500 3.600v8.600L7.500 15.600 0.500 12.200V3.600z" fill="#3a3af0"/><path d="M7.500 0.600L14.500 3.600 7.500 6.800 0.500 3.600z" fill="#5454f6"/><path d="M7.500 6.800L14.500 3.600v8.600L7.500 15.600z" fill="#6c6cf2"/><path d="M0.500 3.600L7.500 6.800v8.800L0.500 12.200z" fill="#2424f0"/></svg>
<span class="t" style="left:108.5px;top:499.0px;font-size:12px;line-height:18px;color:#000;font-family:'Liberation Sans','DejaVu Sans',sans-serif;font-weight:normal;letter-spacing:0.124px;">reverseLightRightStatic</span>
<svg style="left:83.5px;top:517.5px" width="16" height="16" viewBox="0 0 16 16"><path d="M7.500 0.600L14.500 3.600v8.600L7.500 15.600 0.500 12.200V3.600z" fill="#3a3af0"/><path d="M7.500 0.600L14.500 3.600 7.500 6.800 0.500 3.600z" fill="#5454f6"/><path d="M7.500 6.800L14.500 3.600v8.600L7.500 15.600z" fill="#6c6cf2"/><path d="M0.500 3.600L7.500 6.800v8.800L0.500 12.200z" fill="#2424f0"/></svg>
<span class="t" style="left:108.5px;top:517.0px;font-size:12px;line-height:18px;color:#000;font-family:'Liberation Sans','DejaVu Sans',sans-serif;font-weight:normal;letter-spacing:0.115px;">defaultLightRightStatic</span>
<svg style="left:83.5px;top:535.5px" width="16" height="16" viewBox="0 0 16 16"><path d="M7.500 0.600L14.500 3.600v8.600L7.500 15.600 0.500 12.200V3.600z" fill="#3a3af0"/><path d="M7.500 0.600L14.500 3.600 7.500 6.800 0.500 3.600z" fill="#5454f6"/><path d="M7.500 6.800L14.500 3.600v8.600L7.500 15.600z" fill="#6c6cf2"/><path d="M0.500 3.600L7.500 6.800v8.800L0.500 12.200z" fill="#2424f0"/></svg>
<span class="t" style="left:108.5px;top:535.0px;font-size:12px;line-height:18px;color:#000;font-family:'Liberation Sans','DejaVu Sans',sans-serif;font-weight:normal;letter-spacing:0.131px;">breakLightRightStatic</span>
<svg style="left:83.5px;top:553.5px" width="16" height="16" viewBox="0 0 16 16"><path d="M7.500 0.600L14.500 3.600v8.600L7.500 15.600 0.500 12.200V3.600z" fill="#3a3af0"/><path d="M7.500 0.600L14.500 3.600 7.500 6.800 0.500 3.600z" fill="#5454f6"/><path d="M7.500 6.800L14.500 3.600v8.600L7.500 15.600z" fill="#6c6cf2"/><path d="M0.500 3.600L7.500 6.800v8.800L0.500 12.200z" fill="#2424f0"/></svg>
<span class="t" style="left:108.5px;top:553.0px;font-size:12px;line-height:18px;color:#000;font-family:'Liberation Sans','DejaVu Sans',sans-serif;font-weight:normal;letter-spacing:0.094px;">reflectorRight</span>
<svg style="left:83.5px;top:571.5px" width="16" height="16" viewBox="0 0 16 16"><path d="M7.500 0.600L14.500 3.600v8.600L7.500 15.600 0.500 12.200V3.600z" fill="#3a3af0"/><path d="M7.500 0.600L14.500 3.600 7.500 6.800 0.500 3.600z" fill="#5454f6"/><path d="M7.500 6.800L14.500 3.600v8.600L7.500 15.600z" fill="#6c6cf2"/><path d="M0.500 3.600L7.500 6.800v8.800L0.500 12.200z" fill="#2424f0"/></svg>
<span class="t" style="left:108.5px;top:571.0px;font-size:12px;line-height:18px;color:#000;font-family:'Liberation Sans','DejaVu Sans',sans-serif;font-weight:normal;letter-spacing:0.057px;">innerPartStatic</span>
<svg style="left:83.5px;top:589.5px" width="16" height="16" viewBox="0 0 16 16"><path d="M7.500 0.600L14.500 3.600v8.600L7.500 15.600 0.500 12.200V3.600z" fill="#3a3af0"/><path d="M7.500 0.600L14.500 3.600 7.500 6.800 0.500 3.600z" fill="#5454f6"/><path d="M7.500 6.800L14.500 3.600v8.600L7.500 15.600z" fill="#6c6cf2"/><path d="M0.500 3.600L7.500 6.800v8.800L0.500 12.200z" fill="#2424f0"/></svg>
<span class="t" style="left:108.5px;top:589.0px;font-size:12px;line-height:18px;color:#000;font-family:'Liberation Sans','DejaVu Sans',sans-serif;font-weight:normal;letter-spacing:0.098px;">turnLightRightStatic</span>
<svg style="left:419px;top:68px;overflow:hidden" width="1003" height="776" viewBox="419 68 1003 776">
<rect x="419" y="68" width="1003" height="776" fill="#aba9aa"/>
<polygon points="639.5,233.0 771.0,225.5 771.0,216.0 970.0,205.5 981.0,214.4 1150.5,206.8 1153.0,209.0 1122.0,724.0 667.0,651.0 638.0,235.0" fill="#1d201f"/>
<polygon points="680.5,281.5 691.0,281.0 705.5,563.0 697.0,562.0" fill="#151817"/>
<polygon points="691.0,281.0 1091.0,270.0 1076.7,602.2 705.5,563.0" fill="#aba9aa"/>
<polygon points="698.0,562.2 1077.5,602.2 1077.5,607.0 698.5,567.0" fill="#10151d"/>
<polygon points="1025.5,272.0 1096.0,266.0 1089.5,315.5 825.5,500.0 870.0,566.0 864.0,572.5 707.0,557.5 699.0,541.0 740.0,388.0 750.0,387.3 791.0,449.0" fill="#1d201f"/>
<polygon points="825.5,500.0 870.0,566.0 864.0,572.5 707.0,557.5 706.0,552.0 857.0,563.0 819.0,504.5" fill="#151817"/>
<polygon points="740.0,388.0 750.0,387.3 791.0,449.0 786.0,452.5" fill="#151817"/>
<polygon points="1091.0,262.0 1153.0,209.0 1122.0,724.0 1076.7,716.0 1076.7,603.0" fill="#1d201f"/>
<polygon points="813.0,234.4 927.8,230.0 927.8,261.5 813.0,265.5" fill="#b41212"/>
<polygon points="815.5,237.0 925.3,232.7 925.3,258.8 815.5,262.8" fill="#8f7a02"/>
<defs><linearGradient id="wg" x1="0" y1="0" x2="1" y2="0.2"><stop offset="0" stop-color="#a3a7a9"/><stop offset="1" stop-color="#9a9fa2"/></linearGradient><linearGradient id="rg" x1="0" y1="0" x2="0" y2="1"><stop offset="0" stop-color="#7d000c"/><stop offset="1" stop-color="#63000a"/></linearGradient></defs>
<polygon points="743.0,585.5 1011.8,616.7 1009.0,690.0 746.7,654.4" fill="url(#wg)"/>
<polygon points="745.5,585.8 806.7,592.9 864.4,670.4 800.0,661.6" fill="url(#rg)"/>
<polygon points="874.4,600.8 945.0,608.9 1007.8,689.8 935.5,680.0" fill="url(#rg)"/>
<path d="M826 613l5 8M960 632l4 7" stroke="#6d5a4c" stroke-width="1.2" fill="none"/>
<circle cx="717" cy="587" r="6.3" fill="#101212"/>
<circle cx="719" cy="616" r="6.3" fill="#101212"/>
<circle cx="720.4" cy="651.2" r="6.5" fill="#101212"/>
<circle cx="1033" cy="624.4" r="7.8" fill="#101212"/>
<circle cx="1032" cy="661" r="7.8" fill="#101212"/>
<circle cx="1031" cy="697.5" r="7.8" fill="#101212"/>
<path d="M672 624q12-7 24-4q6 3 5 12q-1 10-8 11q-12-1-21-13z" fill="#2e2018"/>
<path d="M679 624l9 1.500l-2 8z" fill="#8f8a84"/><path d="M688 626q8 0 11 4l-2 10q-6 2-11-4z" fill="#45240f"/>
<rect x="655" y="615.5" width="10" height="8" rx="2" fill="#8d8986" transform="rotate(8 660 620)"/>
<ellipse cx="652.5" cy="619.6" rx="3.6" ry="4.6" fill="#3a1812"/>
<path d="M1072 679q16-5 38-1q8 3 7 14q-2 10-10 12h-30q-8-4-8-14q0-8 3-11z" fill="#2e2018"/>
<path d="M1077 681l13 1l-5 9z" fill="#8f8a84"/>
<path d="M1093 682q10 0 18 4v12q-10 4-20 2z" fill="#3f2414"/>
<rect x="1126" y="680" width="22" height="11" rx="2" fill="#8f8b88" transform="rotate(12 1137 686)"/>
<ellipse cx="1151.5" cy="690.5" rx="5" ry="6" fill="#7a1d10"/>
<polyline points="419.0,114.7 646.0,634.5" fill="none" stroke="#c9e2ec" stroke-width="1"/>
<polyline points="419.0,223.5 677.0,639.0" fill="none" stroke="#c9e2ec" stroke-width="1"/>
<polyline points="677.0,639.0 929.0,843.0" fill="none" stroke="#c9e2ec" stroke-width="1"/>
<polyline points="677.0,639.0 951.0,843.0" fill="none" stroke="#c9e2ec" stroke-width="1"/>
<polyline points="646.0,634.5 419.0,639.5" fill="none" stroke="#c9e2ec" stroke-width="1"/>
<polyline points="677.0,639.0 419.0,652.4" fill="none" stroke="#c9e2ec" stroke-width="1"/>
<polyline points="1084.2,699.4 419.0,747.8" fill="none" stroke="#c9e2ec" stroke-width="1"/>
<polyline points="1121.2,708.4 419.0,804.0" fill="none" stroke="#c9e2ec" stroke-width="1"/>
<polyline points="646.0,634.5 569.5,845.0" fill="none" stroke="#c9e2ec" stroke-width="1"/>
<polyline points="677.0,639.0 637.0,845.0" fill="none" stroke="#c9e2ec" stroke-width="1"/>
<polyline points="1094.0,68.0 1084.2,699.4" fill="none" stroke="#c9e2ec" stroke-width="1"/>
<polyline points="1179.0,68.0 1121.2,708.4" fill="none" stroke="#c9e2ec" stroke-width="1"/>
<polyline points="1121.2,708.4 1422.0,813.0" fill="none" stroke="#c9e2ec" stroke-width="1"/>
<polyline points="1121.2,708.4 1422.0,819.0" fill="none" stroke="#c9e2ec" stroke-width="1"/>
<polyline points="1121.2,708.4 1113.7,845.0" fill="none" stroke="#c9e2ec" stroke-width="1"/>
<polyline points="1084.2,699.4 1121.2,708.4" fill="none" stroke="#c9e2ec" stroke-width="1"/>
<polyline points="419.0,202.0 654.5,85.8 732.0,68.0" fill="none" stroke="#e6e66e" stroke-width="1"/>
<polyline points="1116.0,68.0 1084.2,699.4" fill="none" stroke="#e6e66e" stroke-width="1"/>
<polyline points="1422.0,313.0 1121.2,708.4" fill="none" stroke="#e6e66e" stroke-width="1"/>
<polyline points="646.0,634.5 419.0,541.0" fill="none" stroke="#e6e66e" stroke-width="1"/>
<polyline points="646.0,634.5 419.0,582.3" fill="none" stroke="#e6e66e" stroke-width="1"/>
<polyline points="646.0,634.5 419.0,684.0" fill="none" stroke="#e6e66e" stroke-width="1"/>
<polyline points="677.0,639.0 419.0,700.5" fill="none" stroke="#e6e66e" stroke-width="1"/>
<polyline points="646.0,634.5 419.0,729.7" fill="none" stroke="#e6e66e" stroke-width="1"/>
<polyline points="677.0,639.0 419.0,798.0" fill="none" stroke="#e6e66e" stroke-width="1"/>
<polyline points="646.0,634.5 447.6,845.0" fill="none" stroke="#e6e66e" stroke-width="1"/>
<polyline points="677.0,639.0 464.0,845.0" fill="none" stroke="#e6e66e" stroke-width="1"/>
<polyline points="677.0,639.0 571.0,845.0" fill="none" stroke="#e6e66e" stroke-width="1"/>
<polyline points="677.0,639.0 646.0,845.0" fill="none" stroke="#e6e66e" stroke-width="1"/>
<polyline points="1084.2,699.4 1084.6,845.0" fill="none" stroke="#e6e66e" stroke-width="1"/>
<polyline points="1084.2,699.4 1086.0,845.0" fill="none" stroke="#e6e66e" stroke-width="1"/>
<polyline points="1084.2,699.4 833.0,843.0" fill="none" stroke="#e6e66e" stroke-width="1"/>
<polyline points="1121.2,708.4 923.5,843.0" fill="none" stroke="#e6e66e" stroke-width="1"/>
<polyline points="1121.2,708.4 1117.0,843.0" fill="none" stroke="#e6e66e" stroke-width="1"/>
<polyline points="1121.2,708.4 1124.0,843.0" fill="none" stroke="#e6e66e" stroke-width="1"/>
<polyline points="1121.2,708.4 1259.0,843.0" fill="none" stroke="#e6e66e" stroke-width="1"/>
<polyline points="1121.2,708.4 1276.0,843.0" fill="none" stroke="#e6e66e" stroke-width="1"/>
<polyline points="1084.2,699.4 1122.0,724.0" fill="none" stroke="#e6e66e" stroke-width="1"/>
<polyline points="1121.2,708.4 1084.0,716.0" fill="none" stroke="#e6e66e" stroke-width="1"/>
</svg>
<span class="t" style="left:430px;top:823.0px;font-size:11px;line-height:17px;color:#fff;font-family:'Liberation Sans','DejaVu Sans',sans-serif;font-weight:normal;letter-spacing:0.367px;">persp</span>
<div class="hd" style="left:1426px;top:68px;width:494px;height:19px"></div>
<span class="t" style="left:1430px;top:68.0px;font-size:11px;line-height:17px;color:#000;font-family:'Liberation Sans','DejaVu Sans',sans-serif;font-weight:normal;letter-spacing:0.059px;">Attributes</span>
<svg style="left:1906px;top:73px" width="8" height="8" viewBox="0 0 8 8"><path d="M0.7 0.7l6.6 6.6M7.3 0.7l-6.6 6.6" stroke="#000" stroke-width="1.35"/></svg>
<div class="r" style="left:1426px;top:87px;width:494px;height:367px;background:#e9e9e9;border-left:1px solid #a8a8a8;border-bottom:1px solid #a4a4a4;border-right:1px solid #b0b0b0;"></div>
<div class="r" style="left:1428px;top:88px;width:489px;height:364px;background:#fff;border:1px solid #f4f4f4;"></div>
<div class="hd" style="left:1426px;top:458px;width:494px;height:18px"></div>
<span class="t" style="left:1431px;top:458.0px;font-size:11px;line-height:17px;color:#000;font-family:'Liberation Sans','DejaVu Sans',sans-serif;font-weight:normal;letter-spacing:-0.389px;">Material Editing</span>
<svg style="left:1906px;top:463px" width="8" height="8" viewBox="0 0 8 8"><path d="M0.7 0.7l6.6 6.6M7.3 0.7l-6.6 6.6" stroke="#000" stroke-width="1.35"/></svg>
<div class="r" style="left:1426px;top:476px;width:494px;height:368px;background:#f0f0f0;border-left:1px solid #a8a8a8;border-bottom:1px solid #b5b5b5;"></div>
<div class="sec" style="left:1427px;top:476px;width:475px;height:20px"></div>
<span class="t" style="left:1432px;top:477.0px;font-size:12px;line-height:18px;color:#000;font-family:'Liberation Sans','DejaVu Sans',sans-serif;font-weight:normal;letter-spacing:-0.098px;">Material</span>
<svg style="left:1886.5px;top:481.7px" width="8" height="8" viewBox="0 0 9 9"><path d="M0.3 0.8h8.4L4.5 8.6z" fill="#000"/></svg>
<div class="sec" style="left:1427px;top:817px;width:475px;height:20px"></div>
<span class="t" style="left:1431.5px;top:818.0px;font-size:12px;line-height:18px;color:#000;font-family:'Liberation Sans','DejaVu Sans',sans-serif;font-weight:normal;letter-spacing:-0.240px;">Custom Shader</span>
<svg style="left:1886.5px;top:822.7px" width="8" height="8" viewBox="0 0 9 9"><path d="M0.3 0.8h8.4L4.5 8.6z" fill="#000"/></svg>
<div class="r" style="left:1903px;top:476px;width:17px;height:367px;background:#f0f0f0;"></div>
<div class="r" style="left:1903px;top:493px;width:15px;height:94px;background:#cdcdcd;"></div>
<svg style="left:1903px;top:476px" width="17" height="367" viewBox="0 0 17 367"><g stroke="#404040" stroke-width="1.5" fill="none"><path d="M4 11.5l3.5-3.5 3.5 3.5"/><path d="M4 356.5l3.5 3.5 3.5-3.5"/></g></svg>
<span class="t" style="left:1433px;top:504.0px;font-size:12px;line-height:18px;color:#000;font-family:'Liberation Sans','DejaVu Sans',sans-serif;font-weight:normal;letter-spacing:-0.041px;">Shared-Editing Mode</span>
<div class="r" style="left:1549px;top:506.5px;width:13px;height:13px;background:#f3f3f3;border:1px solid #cfcfcf;"></div>
<svg style="left:1549px;top:506.5px" width="13" height="13" viewBox="0 0 13 13"><path d="M3 6.8l2.3 2.4 4.8-5.4" stroke="#c4c4c4" stroke-width="1.2" fill="none"/></svg>
<span class="t" style="left:1502.5px;top:527.0px;font-size:12px;line-height:18px;color:#000;font-family:'Liberation Sans','DejaVu Sans',sans-serif;font-weight:normal;letter-spacing:-0.027px;">Material</span>
<div class="r" style="left:1548px;top:525px;width:144px;height:22.5px;background:#cccccc;border:1px solid #c3c3c3;"></div>
<svg style="left:1677px;top:531px" width="12" height="10" viewBox="0 0 12 10"><path d="M2 3l4 4 4-4" stroke="#b4b4b4" stroke-width="1.2" fill="none"/></svg>
<span class="t" style="left:1480px;top:554.0px;font-size:12px;line-height:18px;color:#000;font-family:'Liberation Sans','DejaVu Sans',sans-serif;font-weight:normal;letter-spacing:0.106px;">Albedo Map</span>
<div class="r" style="left:1548px;top:552.5px;width:195px;height:22px;background:#f1f1f1;border:1px solid #d6d6d6;"></div>
<div class="r" style="left:1549px;top:553.5px;width:193px;height:20px;overflow:hidden">
<span class="t" style="left:6px;top:0.5px;font-size:12px;line-height:18px;color:#858585;font-family:'Liberation Sans','DejaVu Sans',sans-serif;font-weight:normal;letter-spacing:-0.134px;">C:/Program Files (x86)/Steam/steamapps/common/Farming Simulator 19</span>
</div>
<div class="r" style="left:1747px;top:553.0px;width:20px;height:21px;background:#cdcdcd;"></div>
<svg style="left:1747px;top:553.0px" width="20" height="21" viewBox="0 0 20 21"><g fill="#9a9a9a"><rect x="5" y="13" width="1.6" height="1.6"/><rect x="9" y="13" width="1.6" height="1.6"/><rect x="13" y="13" width="1.6" height="1.6"/></g></svg>
<div class="r" style="left:1771px;top:553.0px;width:20px;height:21px;background:#cdcdcd;"></div>
<svg style="left:1771px;top:553.0px" width="20" height="21" viewBox="0 0 20 21"><path d="M5.5 5.5l10 11M14.5 5.5l-9 11" stroke="#e69a9a" stroke-width="1.6" fill="none"/><rect x="3.5" y="4" width="2" height="2" fill="#ead0d0"/></svg>
<span class="t" style="left:1475px;top:583.0px;font-size:12px;line-height:18px;color:#000;font-family:'Liberation Sans','DejaVu Sans',sans-serif;font-weight:normal;letter-spacing:0.057px;">Albedo Color</span>
<div class="r" style="left:1548px;top:580.5px;width:49px;height:22.5px;background:#f0f0f0;border:1px solid #7a7a7a;box-shadow:inset 0 0 0 2px #fff;"></div>
<span class="t" style="left:1553.5px;top:583.5px;font-size:11px;line-height:17px;color:#858585;font-family:'Liberation Sans','DejaVu Sans',sans-serif;font-weight:normal;">0</span>
<div class="r" style="left:1598px;top:581.5px;width:21px;height:20.5px;background:#cdcdcd;"></div>
<svg style="left:1598px;top:581.5px" width="21" height="20" viewBox="0 0 21 20"><path d="M9 6.2v7.6L5 10zM12 6.2v7.6l4-3.8z" fill="#000"/></svg>
<div class="r" style="left:1622px;top:580.5px;width:49px;height:22.5px;background:#f0f0f0;border:1px solid #7a7a7a;box-shadow:inset 0 0 0 2px #fff;"></div>
<span class="t" style="left:1627.5px;top:583.5px;font-size:11px;line-height:17px;color:#858585;font-family:'Liberation Sans','DejaVu Sans',sans-serif;font-weight:normal;">0</span>
<div class="r" style="left:1672px;top:581.5px;width:21px;height:20.5px;background:#cdcdcd;"></div>
<svg style="left:1672px;top:581.5px" width="21" height="20" viewBox="0 0 21 20"><path d="M9 6.2v7.6L5 10zM12 6.2v7.6l4-3.8z" fill="#000"/></svg>
<div class="r" style="left:1696px;top:580.5px;width:49px;height:22.5px;background:#f0f0f0;border:1px solid #7a7a7a;box-shadow:inset 0 0 0 2px #fff;"></div>
<span class="t" style="left:1701.5px;top:583.5px;font-size:11px;line-height:17px;color:#858585;font-family:'Liberation Sans','DejaVu Sans',sans-serif;font-weight:normal;">0</span>
<div class="r" style="left:1746px;top:581.5px;width:21px;height:20.5px;background:#cdcdcd;"></div>
<svg style="left:1746px;top:581.5px" width="21" height="20" viewBox="0 0 21 20"><path d="M9 6.2v7.6L5 10zM12 6.2v7.6l4-3.8z" fill="#000"/></svg>
<div class="r" style="left:1771px;top:581.0px;width:20px;height:21px;background:#cdcdcd;"></div>
<svg style="left:1771px;top:581.0px" width="20" height="21" viewBox="0 0 20 21"><g fill="#9a9a9a"><rect x="5" y="13" width="1.6" height="1.6"/><rect x="9" y="13" width="1.6" height="1.6"/><rect x="13" y="13" width="1.6" height="1.6"/></g></svg>
<span class="t" style="left:1490.5px;top:610.5px;font-size:12px;line-height:18px;color:#000;font-family:'Liberation Sans','DejaVu Sans',sans-serif;font-weight:normal;letter-spacing:-0.357px;">Gloss Map</span>
<div class="r" style="left:1548px;top:608px;width:195px;height:22px;background:#f1f1f1;border:1px solid #d6d6d6;"></div>
<div class="r" style="left:1549px;top:609px;width:193px;height:20px;overflow:hidden">
<span class="t" style="left:6px;top:0.5px;font-size:12px;line-height:18px;color:#858585;font-family:'Liberation Sans','DejaVu Sans',sans-serif;font-weight:normal;letter-spacing:-0.134px;">C:/Program Files (x86)/Steam/steamapps/common/Farming Simulator 19</span>
</div>
<div class="r" style="left:1747px;top:608.5px;width:20px;height:21px;background:#cdcdcd;"></div>
<svg style="left:1747px;top:608.5px" width="20" height="21" viewBox="0 0 20 21"><g fill="#9a9a9a"><rect x="5" y="13" width="1.6" height="1.6"/><rect x="9" y="13" width="1.6" height="1.6"/><rect x="13" y="13" width="1.6" height="1.6"/></g></svg>
<div class="r" style="left:1771px;top:608.5px;width:20px;height:21px;background:#cdcdcd;"></div>
<svg style="left:1771px;top:608.5px" width="20" height="21" viewBox="0 0 20 21"><path d="M5.5 5.5l10 11M14.5 5.5l-9 11" stroke="#e69a9a" stroke-width="1.6" fill="none"/><rect x="3.5" y="4" width="2" height="2" fill="#ead0d0"/></svg>
<span class="t" style="left:1480px;top:637.7px;font-size:12px;line-height:18px;color:#000;font-family:'Liberation Sans','DejaVu Sans',sans-serif;font-weight:normal;letter-spacing:-0.189px;">Smoothness</span>
<div class="r" style="left:1548px;top:636px;width:49px;height:22.5px;background:#f0f0f0;border:1px solid #7a7a7a;box-shadow:inset 0 0 0 2px #fff;"></div>
<span class="t" style="left:1553.5px;top:639.0px;font-size:11px;line-height:17px;color:#858585;font-family:'Liberation Sans','DejaVu Sans',sans-serif;font-weight:normal;">0</span>
<div class="r" style="left:1598px;top:637px;width:21px;height:20.5px;background:#cdcdcd;"></div>
<svg style="left:1598px;top:637px" width="21" height="20" viewBox="0 0 21 20"><path d="M9 6.2v7.6L5 10zM12 6.2v7.6l4-3.8z" fill="#000"/></svg>
<span class="t" style="left:1492.5px;top:664.7px;font-size:12px;line-height:18px;color:#000;font-family:'Liberation Sans','DejaVu Sans',sans-serif;font-weight:normal;letter-spacing:-0.275px;">Metalness</span>
<div class="r" style="left:1548px;top:663px;width:49px;height:22.5px;background:#f0f0f0;border:1px solid #7a7a7a;box-shadow:inset 0 0 0 2px #fff;"></div>
<span class="t" style="left:1553.5px;top:666.0px;font-size:11px;line-height:17px;color:#858585;font-family:'Liberation Sans','DejaVu Sans',sans-serif;font-weight:normal;">0</span>
<div class="r" style="left:1598px;top:664px;width:21px;height:20.5px;background:#cdcdcd;"></div>
<svg style="left:1598px;top:664px" width="21" height="20" viewBox="0 0 21 20"><path d="M9 6.2v7.6L5 10zM12 6.2v7.6l4-3.8z" fill="#000"/></svg>
<span class="t" style="left:1478.5px;top:692.8px;font-size:12px;line-height:18px;color:#000;font-family:'Liberation Sans','DejaVu Sans',sans-serif;font-weight:normal;letter-spacing:0.127px;">Normal Map</span>
<div class="r" style="left:1548px;top:690.5px;width:195px;height:22px;background:#f1f1f1;border:1px solid #d6d6d6;"></div>
<div class="r" style="left:1549px;top:691.5px;width:193px;height:20px;overflow:hidden">
<span class="t" style="left:6px;top:0.5px;font-size:12px;line-height:18px;color:#858585;font-family:'Liberation Sans','DejaVu Sans',sans-serif;font-weight:normal;letter-spacing:-0.134px;">C:/Program Files (x86)/Steam/steamapps/common/Farming Simulator 19</span>
</div>
<div class="r" style="left:1747px;top:691.0px;width:20px;height:21px;background:#cdcdcd;"></div>
<svg style="left:1747px;top:691.0px" width="20" height="21" viewBox="0 0 20 21"><g fill="#9a9a9a"><rect x="5" y="13" width="1.6" height="1.6"/><rect x="9" y="13" width="1.6" height="1.6"/><rect x="13" y="13" width="1.6" height="1.6"/></g></svg>
<div class="r" style="left:1771px;top:691.0px;width:20px;height:21px;background:#cdcdcd;"></div>
<svg style="left:1771px;top:691.0px" width="20" height="21" viewBox="0 0 20 21"><path d="M5.5 5.5l10 11M14.5 5.5l-9 11" stroke="#e69a9a" stroke-width="1.6" fill="none"/><rect x="3.5" y="4" width="2" height="2" fill="#ead0d0"/></svg>
<span class="t" style="left:1478.5px;top:720.0px;font-size:12px;line-height:18px;color:#000;font-family:'Liberation Sans','DejaVu Sans',sans-serif;font-weight:normal;letter-spacing:-0.023px;">Bump Depth</span>
<div class="r" style="left:1548px;top:718px;width:49px;height:22.5px;background:#f0f0f0;border:1px solid #7a7a7a;box-shadow:inset 0 0 0 2px #fff;"></div>
<span class="t" style="left:1553.5px;top:721.0px;font-size:11px;line-height:17px;color:#858585;font-family:'Liberation Sans','DejaVu Sans',sans-serif;font-weight:normal;">1</span>
<div class="r" style="left:1598px;top:719px;width:21px;height:20.5px;background:#cdcdcd;"></div>
<svg style="left:1598px;top:719px" width="21" height="20" viewBox="0 0 21 20"><path d="M9 6.2v7.6L5 10zM12 6.2v7.6l4-3.8z" fill="#000"/></svg>
<span class="t" style="left:1473.5px;top:747.7px;font-size:12px;line-height:18px;color:#000;font-family:'Liberation Sans','DejaVu Sans',sans-serif;font-weight:normal;letter-spacing:-0.290px;">Emissive Map</span>
<div class="r" style="left:1548px;top:745.5px;width:195px;height:22px;background:#f1f1f1;border:1px solid #d6d6d6;"></div>
<div class="r" style="left:1747px;top:746.0px;width:20px;height:21px;background:#cdcdcd;"></div>
<svg style="left:1747px;top:746.0px" width="20" height="21" viewBox="0 0 20 21"><g fill="#9a9a9a"><rect x="5" y="13" width="1.6" height="1.6"/><rect x="9" y="13" width="1.6" height="1.6"/><rect x="13" y="13" width="1.6" height="1.6"/></g></svg>
<div class="r" style="left:1771px;top:746.0px;width:20px;height:21px;background:#cdcdcd;"></div>
<svg style="left:1771px;top:746.0px" width="20" height="21" viewBox="0 0 20 21"><path d="M5.5 5.5l10 11M14.5 5.5l-9 11" stroke="#e69a9a" stroke-width="1.6" fill="none"/><rect x="3.5" y="4" width="2" height="2" fill="#ead0d0"/></svg>
<span class="t" style="left:1464.5px;top:770.6px;font-size:12px;line-height:18px;color:#000;font-family:'Liberation Sans','DejaVu Sans',sans-serif;font-weight:normal;letter-spacing:-0.018px;">Alpha Blending</span>
<div class="r" style="left:1548px;top:774.5px;width:12.5px;height:12.5px;background:#fff;border:1px solid #cdcdcd;"></div>
<span class="t" style="left:1523px;top:793.6px;font-size:12px;line-height:18px;color:#000;font-family:'Liberation Sans','DejaVu Sans',sans-serif;font-weight:normal;letter-spacing:-0.672px;">Refl.</span>
<div class="r" style="left:1548px;top:792px;width:72px;height:22.5px;background:#f1f1f1;border:1px solid #d3d3d3;"></div>
<span class="t" style="left:1555px;top:794.5px;font-size:11px;line-height:17px;color:#858585;font-family:'Liberation Sans','DejaVu Sans',sans-serif;font-weight:normal;letter-spacing:-0.270px;">1.000000</span>
<div class="hd2" style="left:0;top:848px;width:1920px;height:18px"></div>
<span class="t" style="left:4px;top:848.0px;font-size:11px;line-height:17px;color:#000;font-family:'Liberation Sans','DejaVu Sans',sans-serif;font-weight:normal;letter-spacing:-0.393px;transform:scaleX(1);">Console</span>
<svg style="left:1906px;top:853px" width="8" height="8" viewBox="0 0 8 8"><path d="M0.7 0.7l6.6 6.6M7.3 0.7l-6.6 6.6" stroke="#000" stroke-width="1.35"/></svg>
<div class="r" style="left:0px;top:866px;width:1903px;height:90px;background:#c2c2c2;border-left:1px solid #9a9a9a;border-top:1px solid #c8c8c8;"></div>
<span class="t" style="left:4px;top:865.0px;font-size:12px;line-height:18px;color:#000;font-family:'Liberation Sans','DejaVu Sans',sans-serif;font-weight:normal;letter-spacing:-0.084px;">Error: Can&#x27;t load resource &#x27;C:/Users/Ryzen/Documents/My Games/FarmingSimulator2019/mods1/scania_xt_6x4/Textures/Bande.dds&#x27;.</span>
<span class="t" style="left:4px;top:880.0px;font-size:12px;line-height:18px;color:#000;font-family:'Liberation Sans','DejaVu Sans',sans-serif;font-weight:normal;letter-spacing:-0.162px;">C:\Users\Ryzen\Documents\My Games\FarmingSimulator2019\mods1\FS19_EWR150E_Mower\mower.i3d (108.15 ms)</span>
<span class="t" style="left:4px;top:895.0px;font-size:12px;line-height:18px;color:#000;font-family:'Liberation Sans','DejaVu Sans',sans-serif;font-weight:normal;letter-spacing:-0.157px;">C:\Users\Ryzen\Documents\My Games\FarmingSimulator2019\mods\FS19_EWR150E_Mower\mower.i3d (194.33 ms)</span>
<span class="t" style="left:4px;top:910.0px;font-size:12px;line-height:18px;color:#000;font-family:'Liberation Sans','DejaVu Sans',sans-serif;font-weight:normal;letter-spacing:-0.215px;">C:\Users\Ryzen\Videos\FS19_Grousbauer_Gewicht\Eigenbaugewicht.i3d (239.67 ms)</span>
<span class="t" style="left:4px;top:925.0px;font-size:12px;line-height:18px;color:#000;font-family:'Liberation Sans','DejaVu Sans',sans-serif;font-weight:normal;letter-spacing:-0.189px;">Scenefile &#x27;C:/Users/Ryzen/Documents/My Games/FarmingSimulator2019/mods/FS19_EWR150E_Mower/sign.i3d&#x27; saved in 38.087700 ms.</span>
<div class="r" style="left:1903px;top:866px;width:17px;height:90px;background:#f0f0f0;"></div>
<div class="r" style="left:1903px;top:922px;width:17px;height:17px;background:#cdcdcd;"></div>
<svg style="left:1903px;top:866px" width="17" height="90" viewBox="0 0 17 90"><g stroke="#404040" stroke-width="1.4" fill="none"><path d="M5 10.5l3.5-3.5 3.5 3.5"/><path d="M5 79.5l3.5 3.5 3.5-3.5"/></g></svg>
<div class="r" style="left:0px;top:956px;width:1920px;height:44px;background:#fff;border-left:1px solid #9a9a9a;"></div>
<div class="r" style="left:1px;top:956px;width:64px;height:44px;background:#f0f0f0;"></div>
<div class="r" style="left:65px;top:956px;width:17px;height:44px;background:#f8f8f8;"></div>
<span class="t" style="left:31px;top:960.0px;font-size:11px;line-height:17px;color:#333;font-family:'Liberation Mono','DejaVu Sans Mono',monospace;font-weight:normal;">1</span>
<div class="r" style="left:0px;top:1000px;width:1920px;height:16px;background:#f0f0f0;border-left:1px solid #9a9a9a;"></div>
<div class="r" style="left:18px;top:1000px;width:1730px;height:16px;background:#cdcdcd;"></div>
<svg style="left:0;top:1000px" width="1920" height="16" viewBox="0 0 1920 16"><g stroke="#404040" stroke-width="1.5" fill="none"><path d="M11.5 4.5l-3.5 3.5 3.5 3.5"/><path d="M1907.5 4.5l3.5 3.5-3.5 3.5"/></g></svg>
<div class="r" style="left:0px;top:1016px;width:1920px;height:1px;background:#a0a0a0;"></div>
<div class="r" style="left:0px;top:1017px;width:1920px;height:23px;background:#f0f0f0;border-top:1px solid #fbfbfb;"></div>
<div class="r" style="left:159px;top:1019px;width:1px;height:21px;background:#d9d9d9;"></div>
<span class="t" style="left:2px;top:1021.5px;font-size:12px;line-height:18px;color:#000;font-family:'Liberation Sans','DejaVu Sans',sans-serif;font-weight:normal;letter-spacing:-0.672px;">Ready</span>
<span class="t" style="left:1746px;top:1021.5px;font-size:12px;line-height:18px;color:#000;font-family:'Liberation Sans','DejaVu Sans',sans-serif;font-weight:normal;letter-spacing:-0.132px;">NavSpeed 2 +/-</span>
<div class="r" style="left:0px;top:1040px;width:1920px;height:40px;background:#1f201f;"></div>
<svg style="left:16px;top:1052px" width="16" height="16" viewBox="0 0 16 16"><path d="M0 2.300l6.500-.9v6.100H0zM7.300 1.300L16 0v7.500H7.300zM0 8.300h6.500v6.100L0 13.500zM7.300 8.300H16V16l-8.700-1.200z" fill="#fff"/></svg>
<svg style="left:63px;top:1052px" width="18" height="16" viewBox="0 0 18 16"><g fill="none" stroke="#fff" stroke-width="1.300"><path d="M1 0.700h11M1 15.300h11"/><rect x="1.500" y="4" width="10" height="8"/><path d="M15.500 1v3M15.500 6.500v9"/><rect x="14.500" y="4" width="2" height="2.500" fill="#fff" stroke="none"/></g></svg>
<svg style="left:110.5px;top:1048px" width="24" height="24" viewBox="0 0 24 24"><rect width="24" height="24" fill="#eef0fb"/><circle cx="12" cy="9" r="7.500" fill="none" stroke="#3f5fe0" stroke-width="3"/><circle cx="12.500" cy="9.500" r="2.600" fill="none" stroke="#3f5fe0" stroke-width="2"/><path d="M4 14c3 3 9 4 14 0" stroke="#eef0fb" stroke-width="1.500" fill="none"/><text x="12" y="23" font-size="6.500" font-family="Liberation Sans,sans-serif" font-weight="bold" text-anchor="middle" fill="#3f5fe0">trocen</text></svg>
<svg style="left:159.5px;top:1048px" width="24" height="24" viewBox="0 0 24 24"><path d="M12 1.500c7 0 10.500 2 10.500 9.500 0 7-3.500 9-8.500 9.300L10 24v-4c-5-.5-8.500-2.500-8.500-9 0-7.500 3.500-9.500 10.500-9.500z" fill="#7d5fe0" stroke="#ded4ff" stroke-width="1.600"/><path d="M8 6.500c1-1 2-.5 2.800 1 .5 1 0 1.500-.6 2.200 1 2 2.500 3.500 4.300 4.300.7-.7 1.300-1.200 2.300-.6 1.300.8 1.800 1.800.8 2.800-1.500 1.500-4.500 0-7-2.500S6.500 8 8 6.500z" fill="#fff"/><path d="M13 5.500c3 .3 5 2.300 5.200 5.200M13.200 7.800c1.600.2 2.600 1.200 2.800 2.800" stroke="#fff" stroke-width=".9" fill="none"/></svg>
<svg style="left:208.5px;top:1048px" width="24" height="24" viewBox="0 0 24 24"><circle cx="12" cy="12" r="11.500" fill="#dd4b3e"/><path d="M12 12L2.040 17.750A11.500 11.500 0 0 0 12 23.500l5.750-9.960z" fill="#1ea362"/><path d="M12 12l5.750 1.540L12 23.500A11.500 11.500 0 0 0 21.960 6.250H12z" fill="#fdd140"/><path d="M2.040 6.250A11.500 11.500 0 0 0 2.040 17.750L7.500 12z" fill="#1ea362"/><circle cx="12" cy="12" r="5.400" fill="#f1f1f1"/><circle cx="12" cy="12" r="4.300" fill="#4a8af4"/></svg>
<svg style="left:257.5px;top:1048px" width="24" height="24" viewBox="0 0 24 24"><circle cx="12" cy="12" r="10.600" fill="#0a0a0a" stroke="#fff" stroke-width="2"/><circle cx="12" cy="12" r="5.600" fill="#ee2a2a"/></svg>
<svg style="left:306.5px;top:1048px" width="24" height="24" viewBox="0 0 24 24"><path d="M3.500 1.500h17a2 2 0 0 1 2 2V24l-4-3.500H3.500a2 2 0 0 1-2-2v-15a2 2 0 0 1 2-2z" fill="#6f85d4"/><path d="M6 8.500c2-1.500 10-1.500 12 0 1.200 2.500 1.800 5 1.800 7.500-1.500 1.200-3 1.600-4.300 1.800l-.8-1.400H9.300l-.8 1.400c-1.300-.2-2.800-.6-4.300-1.800 0-2.500.6-5 1.800-7.500z" fill="#fff"/><ellipse cx="9.300" cy="12.800" rx="1.600" ry="1.800" fill="#6f85d4"/><ellipse cx="14.700" cy="12.800" rx="1.600" ry="1.800" fill="#6f85d4"/></svg>
<svg style="left:355.5px;top:1048px" width="24" height="24" viewBox="0 0 24 24"><rect width="24" height="24" fill="#b5090e"/><rect x="0" y="0" width="24" height="12" fill="#c8151a"/><path d="M14.500 2.500L7 13.500h4.200L9 22l8-12h-4.500z" fill="#fff"/></svg>
<svg style="left:404.5px;top:1048px" width="24" height="24" viewBox="0 0 24 24"><circle cx="12" cy="12" r="11.500" fill="#14315e"/><path d="M0.700 14a11.500 11.500 0 0 0 22.600 0z" fill="#1d6fa8"/><circle cx="16" cy="8.500" r="4" fill="none" stroke="#fff" stroke-width="1.600"/><circle cx="16" cy="8.500" r="1.800" fill="#cfe3f4"/><path d="M0.800 11.500l7 3a3.200 3.200 0 0 1 2.800-.6l3-4.300 3.700 3.500-4.300 3a3.200 3.200 0 0 1-6.300.8L1.200 15z" fill="#fff"/></svg>
<svg style="left:453.5px;top:1048px" width="24" height="24" viewBox="0 0 24 24"><g transform="translate(12 12)"><g fill="#d18f3a"><rect x="-2.500" y="-12.500" width="5" height="6" transform="rotate(0)"/><rect x="-2.500" y="-12.500" width="5" height="6" transform="rotate(36)"/><rect x="-2.500" y="-12.500" width="5" height="6" transform="rotate(72)"/><rect x="-2.500" y="-12.500" width="5" height="6" transform="rotate(108)"/><rect x="-2.500" y="-12.500" width="5" height="6" transform="rotate(144)"/><rect x="-2.500" y="-12.500" width="5" height="6" transform="rotate(180)"/><rect x="-2.500" y="-12.500" width="5" height="6" transform="rotate(216)"/><rect x="-2.500" y="-12.500" width="5" height="6" transform="rotate(252)"/><rect x="-2.500" y="-12.500" width="5" height="6" transform="rotate(288)"/><rect x="-2.500" y="-12.500" width="5" height="6" transform="rotate(324)"/></g><circle r="9.600" fill="#d18f3a"/><path d="M9.600 -5L-5 9.600A9.600 9.600 0 0 0 9.600 -5z" fill="#55b044"/><g fill="#55b044"><rect x="-2.500" y="-12.500" width="5" height="6" transform="rotate(108)"/><rect x="-2.500" y="-12.500" width="5" height="6" transform="rotate(144)"/><rect x="-2.500" y="-12.500" width="5" height="6" transform="rotate(180)"/></g></g><text x="8.500" y="10.500" font-size="7.500" font-family="Liberation Sans,sans-serif" font-weight="bold" text-anchor="middle" fill="#fff">19</text><text x="15" y="19" font-size="7.500" font-family="Liberation Sans,sans-serif" font-weight="bold" text-anchor="middle" fill="#fff">17</text></svg>
<svg style="left:502.5px;top:1048px" width="24" height="24" viewBox="0 0 24 24"><circle cx="12" cy="12" r="11.300" fill="#d7dbe8"/><circle cx="12" cy="12" r="11.300" fill="none" stroke="#7f86a8" stroke-width="1"/><circle cx="13.500" cy="12.500" r="8.300" fill="#161c5a"/><circle cx="16" cy="10" r="3.500" fill="#3a48a8"/><path d="M3 9a10 10 0 0 1 12-6.800" stroke="#fff" stroke-width="2.200" fill="none"/></svg>
<svg style="left:551.5px;top:1048px" width="24" height="24" viewBox="0 0 24 24"><path d="M2 5l10-4 10 4v12l-10 5-10-5z" fill="#c4161c"/><path d="M2 5l10 4 10-4-10-4z" fill="#e0393f"/><path d="M12 9v13l10-5V5z" fill="#a50f14"/><text x="11.500" y="15" font-size="11" font-family="Liberation Sans,sans-serif" font-weight="bold" text-anchor="middle" fill="#fff" letter-spacing="0.500">SW</text><text x="14.500" y="24" font-size="7.500" font-family="Liberation Sans,sans-serif" font-weight="bold" text-anchor="middle" fill="#fff" stroke="#111" stroke-width="1.600" paint-order="stroke">2019</text></svg>
<svg style="left:600.5px;top:1048px" width="24" height="24" viewBox="0 0 24 24"><rect width="24" height="24" fill="#ef443b"/><path d="M10 6.500l5.500 5.500-5.500 5.500-5.500-5.500z" fill="#fff"/><path d="M14.500 6.500L20 12l-5.500 5.500-1.800-1.800 3.700-3.700-3.700-3.700z" fill="#fff"/></svg>
<svg style="left:649.5px;top:1048px" width="24" height="24" viewBox="0 0 24 24"><rect x="2" y="4" width="20" height="15" fill="#f3f3f3" stroke="#c5c5c5"/><rect x="7.500" y="7" width="9" height="9.500" fill="#1a78d8"/><path d="M3.500 7h3M3.500 9.500h3M3.500 12h3M3.500 14.500h3M17.500 7h3M17.500 9.500h3M17.500 12h3M17.500 14.500h3" stroke="#7c7c7c" stroke-width="1"/></svg>
<svg style="left:698.5px;top:1048px" width="24" height="24" viewBox="0 0 24 24"><path d="M1.500 5.500a1 1 0 0 1 1-1h6l2 2h11v14h-20z" fill="#f0b429"/><rect x="1.500" y="8" width="21" height="13" rx=".8" fill="#fcd462"/><path d="M6 14h12v7H6z" fill="#3d8fe0"/><rect x="9.500" y="17.500" width="5" height="3.500" fill="#fcd462"/></svg>
<svg style="left:747.5px;top:1048px" width="24" height="24" viewBox="0 0 24 24"><ellipse cx="16" cy="13" rx="5.500" ry="7" fill="#c8a02a"/><path d="M13 7c1-3 2-4 3-5 1 1 2 2 3 5z" fill="#3d8a2e"/><path d="M12 12h8M12 15h8M14 8l4 12M18 8l-4 12" stroke="#8a6a14" stroke-width=".6"/><path d="M2 7h10c0 5-2 8-5 8S2 12 2 7z" fill="#e85050" opacity=".92"/><path d="M2 7h10" stroke="#f8d0d0" stroke-width="1"/><path d="M7 15v6M4 21.500h6" stroke="#e8d8d8" stroke-width="1.200"/><circle cx="4" cy="4" r="2" fill="#d82c2c"/><path d="M9 2.500l3-1.500" stroke="#5aa83c" stroke-width="1.200"/></svg>
<svg style="left:796.5px;top:1048px" width="24" height="24" viewBox="0 0 24 24"><rect width="24" height="24" fill="#fff"/><rect x="4.500" y="8" width="15" height="8" rx="4" fill="none" stroke="#111" stroke-width="2.600"/></svg>
<svg style="left:845.5px;top:1048px" width="24" height="24" viewBox="0 0 24 24"><path d="M2 2l20-1.500v22L2 21z" fill="#f8b90e"/><path d="M2 21l20 1.500v-4L2 17z" fill="#e09a06"/><path d="M6 5.500h12.500v3H9.500M18.500 12v7H6v-3h9.500v-1.500h-6V12z" fill="#fff"/><path d="M6 5.500h12.500v3H6z" fill="#fff"/></svg>
<svg style="left:894.5px;top:1048px" width="24" height="24" viewBox="0 0 24 24"><path d="M2 2l20-1.500v22L2 21z" fill="#d8120e"/><path d="M2 21l20 1.500v-4L2 17z" fill="#a80c0a"/><path d="M6 5.500h12.500v3H9.500M18.500 12v7H6v-3h9.500v-1.500h-6V12z" fill="#fff"/><path d="M6 5.500h12.500v3H6z" fill="#fff"/></svg>
<svg style="left:943.5px;top:1048px" width="24" height="24" viewBox="0 0 24 24"><path d="M2 2l20-1.500v22L2 21z" fill="#2a4fb8"/><path d="M2 21l20 1.500v-4L2 17z" fill="#1c3a94"/><path d="M6 5.500h12.500v3H9.500M18.500 12v7H6v-3h9.500v-1.500h-6V12z" fill="#fff"/><path d="M6 5.500h12.500v3H6z" fill="#fff"/></svg>
<svg style="left:992.5px;top:1048px" width="24" height="24" viewBox="0 0 24 24"><path d="M6 9c2-3 7-4 11-2l4-3-1 6c1 3-1 6-5 7-5 1-9-1-10-4z" fill="#8a857c"/><path d="M3 10l5 2-1 3z" fill="#6a655c"/><circle cx="11" cy="10" r="2" fill="#fff"/><circle cx="15.500" cy="9.500" r="2" fill="#fff"/><circle cx="11.300" cy="10.200" r=".9" fill="#111"/><circle cx="15.700" cy="9.700" r=".9" fill="#111"/><ellipse cx="4" cy="11" rx="1.800" ry="1.500" fill="#ddd"/><path d="M16 16l6 4" stroke="#b8b0a0" stroke-width="1.600"/></svg>
<svg style="left:1040.5px;top:1048px" width="24" height="24" viewBox="0 0 24 24"><rect x="3" y="1" width="18" height="22" fill="#f6f6f6" stroke="#c8c8c8"/><rect x="4.500" y="2.500" width="15" height="12" fill="#2a58c8"/><path d="M4.500 12c4-3 8-5 15-6v8.500h-15z" fill="#7ab0f0"/><rect x="4.500" y="15" width="15" height="6.500" fill="#e8eef8"/><path d="M7 20l13-9" stroke="#d82c2c" stroke-width="1.400"/><path d="M6 18.500h6v3H6z" fill="#223a78"/></svg>
<svg style="left:1090.5px;top:1048px" width="24" height="24" viewBox="0 0 24 24"><circle cx="12" cy="13" r="10.500" fill="#ff9a1f"/><path d="M12 2.500c6 0 10.500 4.500 10.500 10.500S18 23.500 12 23.500 1.500 19 1.500 13c0-3 1-5 2.500-6.500 0 2 1 3 2 3 0-3 2-5.500 6-7z" fill="#ff5a2a"/><path d="M17 1c3 2 5.500 6 5.500 10l-4-3c0-3-.5-5-1.500-7z" fill="#ffc13a"/><circle cx="12" cy="13.500" r="5.600" fill="#7a3fd8"/><path d="M6.500 12c2-1.500 4-1.500 5.500 0 1 1 3 1 4-.5 1 3-1 7-5 7s-6-3.500-4.500-6.500z" fill="#ff8a2a"/></svg>
<svg style="left:1139.5px;top:1048px" width="24" height="24" viewBox="0 0 24 24"><path d="M1.500 15.500L12 7 9.500 7 9.500 4.500 14 4.500 22 11c2 2 1.500 6-1 8s-7 2.500-10 .5c-2-1.300-2.800-3-2.500-5H5.500z" fill="#f5792a"/><circle cx="14.500" cy="13.500" r="4.700" fill="#fff"/><circle cx="14.500" cy="13.500" r="2.700" fill="#1f5fa8"/></svg>
<svg style="left:1188.5px;top:1048px" width="24" height="24" viewBox="0 0 24 24"><rect width="24" height="24" rx="1" fill="#27383f"/><path d="M12 4l3.500 3.500L12 11 8.500 7.500z" fill="#eafff8"/><path d="M15 11l3.500 3.500-7 7L8 18z" fill="#3fd8b0"/></svg>
<svg style="left:1237.5px;top:1048px" width="24" height="24" viewBox="0 0 24 24"><circle cx="12" cy="12" r="11.500" fill="#14315e"/><path d="M0.700 14a11.500 11.500 0 0 0 22.600 0z" fill="#1d6fa8"/><circle cx="16" cy="8.500" r="4" fill="none" stroke="#fff" stroke-width="1.600"/><circle cx="16" cy="8.500" r="1.800" fill="#cfe3f4"/><path d="M0.800 11.500l7 3a3.200 3.200 0 0 1 2.800-.6l3-4.300 3.700 3.500-4.300 3a3.200 3.200 0 0 1-6.300.8L1.200 15z" fill="#fff"/></svg>
<svg style="left:1286.5px;top:1048px" width="24" height="24" viewBox="0 0 24 24"><path d="M2.500 3.500h17l2.500 2v15h-17l-2.500-2z" fill="#7fb4e0"/><rect x="2.500" y="3.500" width="17" height="15" fill="#a8d0f0" stroke="#4a88c0" stroke-width=".8"/><circle cx="11" cy="11" r="6" fill="#f08a1c"/><path d="M9 7.500v7l6-3.500z" fill="#fff"/></svg>
<svg style="left:1335.5px;top:1048px" width="24" height="24" viewBox="0 0 24 24"><path d="M2 5l10-4 10 4v12l-10 5-10-5z" fill="#c4161c"/><path d="M2 5l10 4 10-4-10-4z" fill="#e0393f"/><path d="M12 9v13l10-5V5z" fill="#a50f14"/><text x="11.500" y="15" font-size="11" font-family="Liberation Sans,sans-serif" font-weight="bold" text-anchor="middle" fill="#fff" letter-spacing="0.500">SW</text><text x="14.500" y="24" font-size="7.500" font-family="Liberation Sans,sans-serif" font-weight="bold" text-anchor="middle" fill="#fff" stroke="#111" stroke-width="1.600" paint-order="stroke">2019</text></svg>
<svg style="left:1384.5px;top:1048px" width="24" height="24" viewBox="0 0 24 24"><path d="M7 2.500l14 1.500-3 17L3 19.500z" fill="#9ec8d8"/><path d="M8.500 4.500l10.500 1.200-2.400 13L5.500 17.500z" fill="#d0eaf0"/><path d="M7 2.500l14 1.500-.5 2.500L6.500 5z" fill="#6a98a8"/><path d="M3 19.500l15 1.500 1 1.500-15-1z" fill="#c8b078"/></svg>
<div class="r" style="left:151.5px;top:1077.5px;width:40px;height:2.5px;background:#76b9ed;"></div>
<div class="r" style="left:298.5px;top:1077.5px;width:40px;height:2.5px;background:#76b9ed;"></div>
<div class="r" style="left:445.5px;top:1077.5px;width:40px;height:2.5px;background:#76b9ed;"></div>
<div class="r" style="left:477.5px;top:1077.5px;width:1px;height:2.5px;background:#3f5f78;"></div>
<div class="r" style="left:478.5px;top:1077.5px;width:7px;height:2.5px;background:#5f97c4;"></div>
<div class="r" style="left:690.5px;top:1077.5px;width:40px;height:2.5px;background:#76b9ed;"></div>
<div class="r" style="left:722.5px;top:1077.5px;width:1px;height:2.5px;background:#3f5f78;"></div>
<div class="r" style="left:723.5px;top:1077.5px;width:7px;height:2.5px;background:#5f97c4;"></div>
<div class="r" style="left:837.5px;top:1077.5px;width:40px;height:2.5px;background:#76b9ed;"></div>
<div class="r" style="left:869.5px;top:1077.5px;width:1px;height:2.5px;background:#3f5f78;"></div>
<div class="r" style="left:870.5px;top:1077.5px;width:7px;height:2.5px;background:#5f97c4;"></div>
<div class="r" style="left:886.5px;top:1077.5px;width:40px;height:2.5px;background:#76b9ed;"></div>
<div class="r" style="left:1082.5px;top:1077.5px;width:40px;height:2.5px;background:#76b9ed;"></div>
<div class="r" style="left:1131.5px;top:1077.5px;width:40px;height:2.5px;background:#76b9ed;"></div>
<div class="r" style="left:1163.5px;top:1077.5px;width:1px;height:2.5px;background:#3f5f78;"></div>
<div class="r" style="left:1164.5px;top:1077.5px;width:7px;height:2.5px;background:#5f97c4;"></div>
<div class="r" style="left:1180.5px;top:1077.5px;width:40px;height:2.5px;background:#76b9ed;"></div>
<div class="r" style="left:1229.5px;top:1077.5px;width:40px;height:2.5px;background:#76b9ed;"></div>
<div class="r" style="left:1278.5px;top:1077.5px;width:40px;height:2.5px;background:#76b9ed;"></div>
<div class="r" style="left:1310.5px;top:1077.5px;width:1px;height:2.5px;background:#3f5f78;"></div>
<div class="r" style="left:1311.5px;top:1077.5px;width:7px;height:2.5px;background:#5f97c4;"></div>
<div class="r" style="left:1327.5px;top:1077.5px;width:40px;height:2.5px;background:#76b9ed;"></div>
<div class="r" style="left:1359.5px;top:1077.5px;width:1px;height:2.5px;background:#3f5f78;"></div>
<div class="r" style="left:1360.5px;top:1077.5px;width:7px;height:2.5px;background:#5f97c4;"></div>
<div class="r" style="left:1376.5px;top:1077.5px;width:40px;height:2.5px;background:#76b9ed;"></div>
<div class="r" style="left:1408.5px;top:1077.5px;width:1px;height:2.5px;background:#3f5f78;"></div>
<div class="r" style="left:1409.5px;top:1077.5px;width:7px;height:2.5px;background:#5f97c4;"></div>
<svg style="left:1660px;top:1040px" width="260" height="40" viewBox="0 0 260 40"><g fill="none" stroke="#fff" stroke-width="1.200"><path d="M9.500 23l6-6 6 6"/><path d="M31.500 17.500h2.500l4-3.500v12l-4-3.500h-2.500z"/><path d="M40.500 17.500a3.500 3.500 0 0 1 0 5M42.800 15.300a6.800 6.800 0 0 1 0 9.400M45 13.200a9.800 9.800 0 0 1 0 13.600" stroke-width="1"/><rect x="59.500" y="14.500" width="12" height="8.500"/><path d="M65.500 23v3.500M61.500 26.500h8"/><rect x="55.500" y="13.500" width="4.500" height="3.500" fill="#1f201f"/><path d="M57.500 17v8h3"/><rect x="79.500" y="13.500" width="22" height="12" rx="1"/><path d="M82.500 16.500h16M82.500 19.500h16" stroke-dasharray="1.400 1.500" stroke-width="1.400"/><path d="M85 22.500h11" stroke-width="1.400"/></g><path d="M219 12.500h16v11h-9.500l-3.500 3.500v-3.500h-3z" fill="#fff"/><path d="M222 16h10M222 18.500h10M222 21h7" stroke="#1f201f" stroke-width="1"/><circle cx="234.500" cy="27.400" r="7.300" fill="#1f201f" stroke="#bdbdbd" stroke-width="1"/><path d="M255.500 0v40" stroke="#6a6a6a" stroke-width="1"/></svg>
<span class="t" style="left:1773px;top:1051.0px;font-size:11px;line-height:17px;color:#fff;font-family:'Liberation Sans','DejaVu Sans',sans-serif;font-weight:normal;letter-spacing:-0.422px;">ENG</span>
<span class="t" style="left:1815px;top:1041.8px;font-size:12px;line-height:18px;color:#fff;font-family:'Liberation Sans','DejaVu Sans',sans-serif;font-weight:normal;letter-spacing:-0.534px;">7:51 PM</span>
<span class="t" style="left:1809px;top:1059.5px;font-size:12px;line-height:18px;color:#fff;font-family:'Liberation Sans','DejaVu Sans',sans-serif;font-weight:normal;letter-spacing:-0.111px;">6/16/2020</span>
<span class="t" style="left:1891.4px;top:1059.1px;font-size:11px;line-height:17px;color:#fff;font-family:'Liberation Sans','DejaVu Sans',sans-serif;font-weight:bold;">2</span>
</body></html>
